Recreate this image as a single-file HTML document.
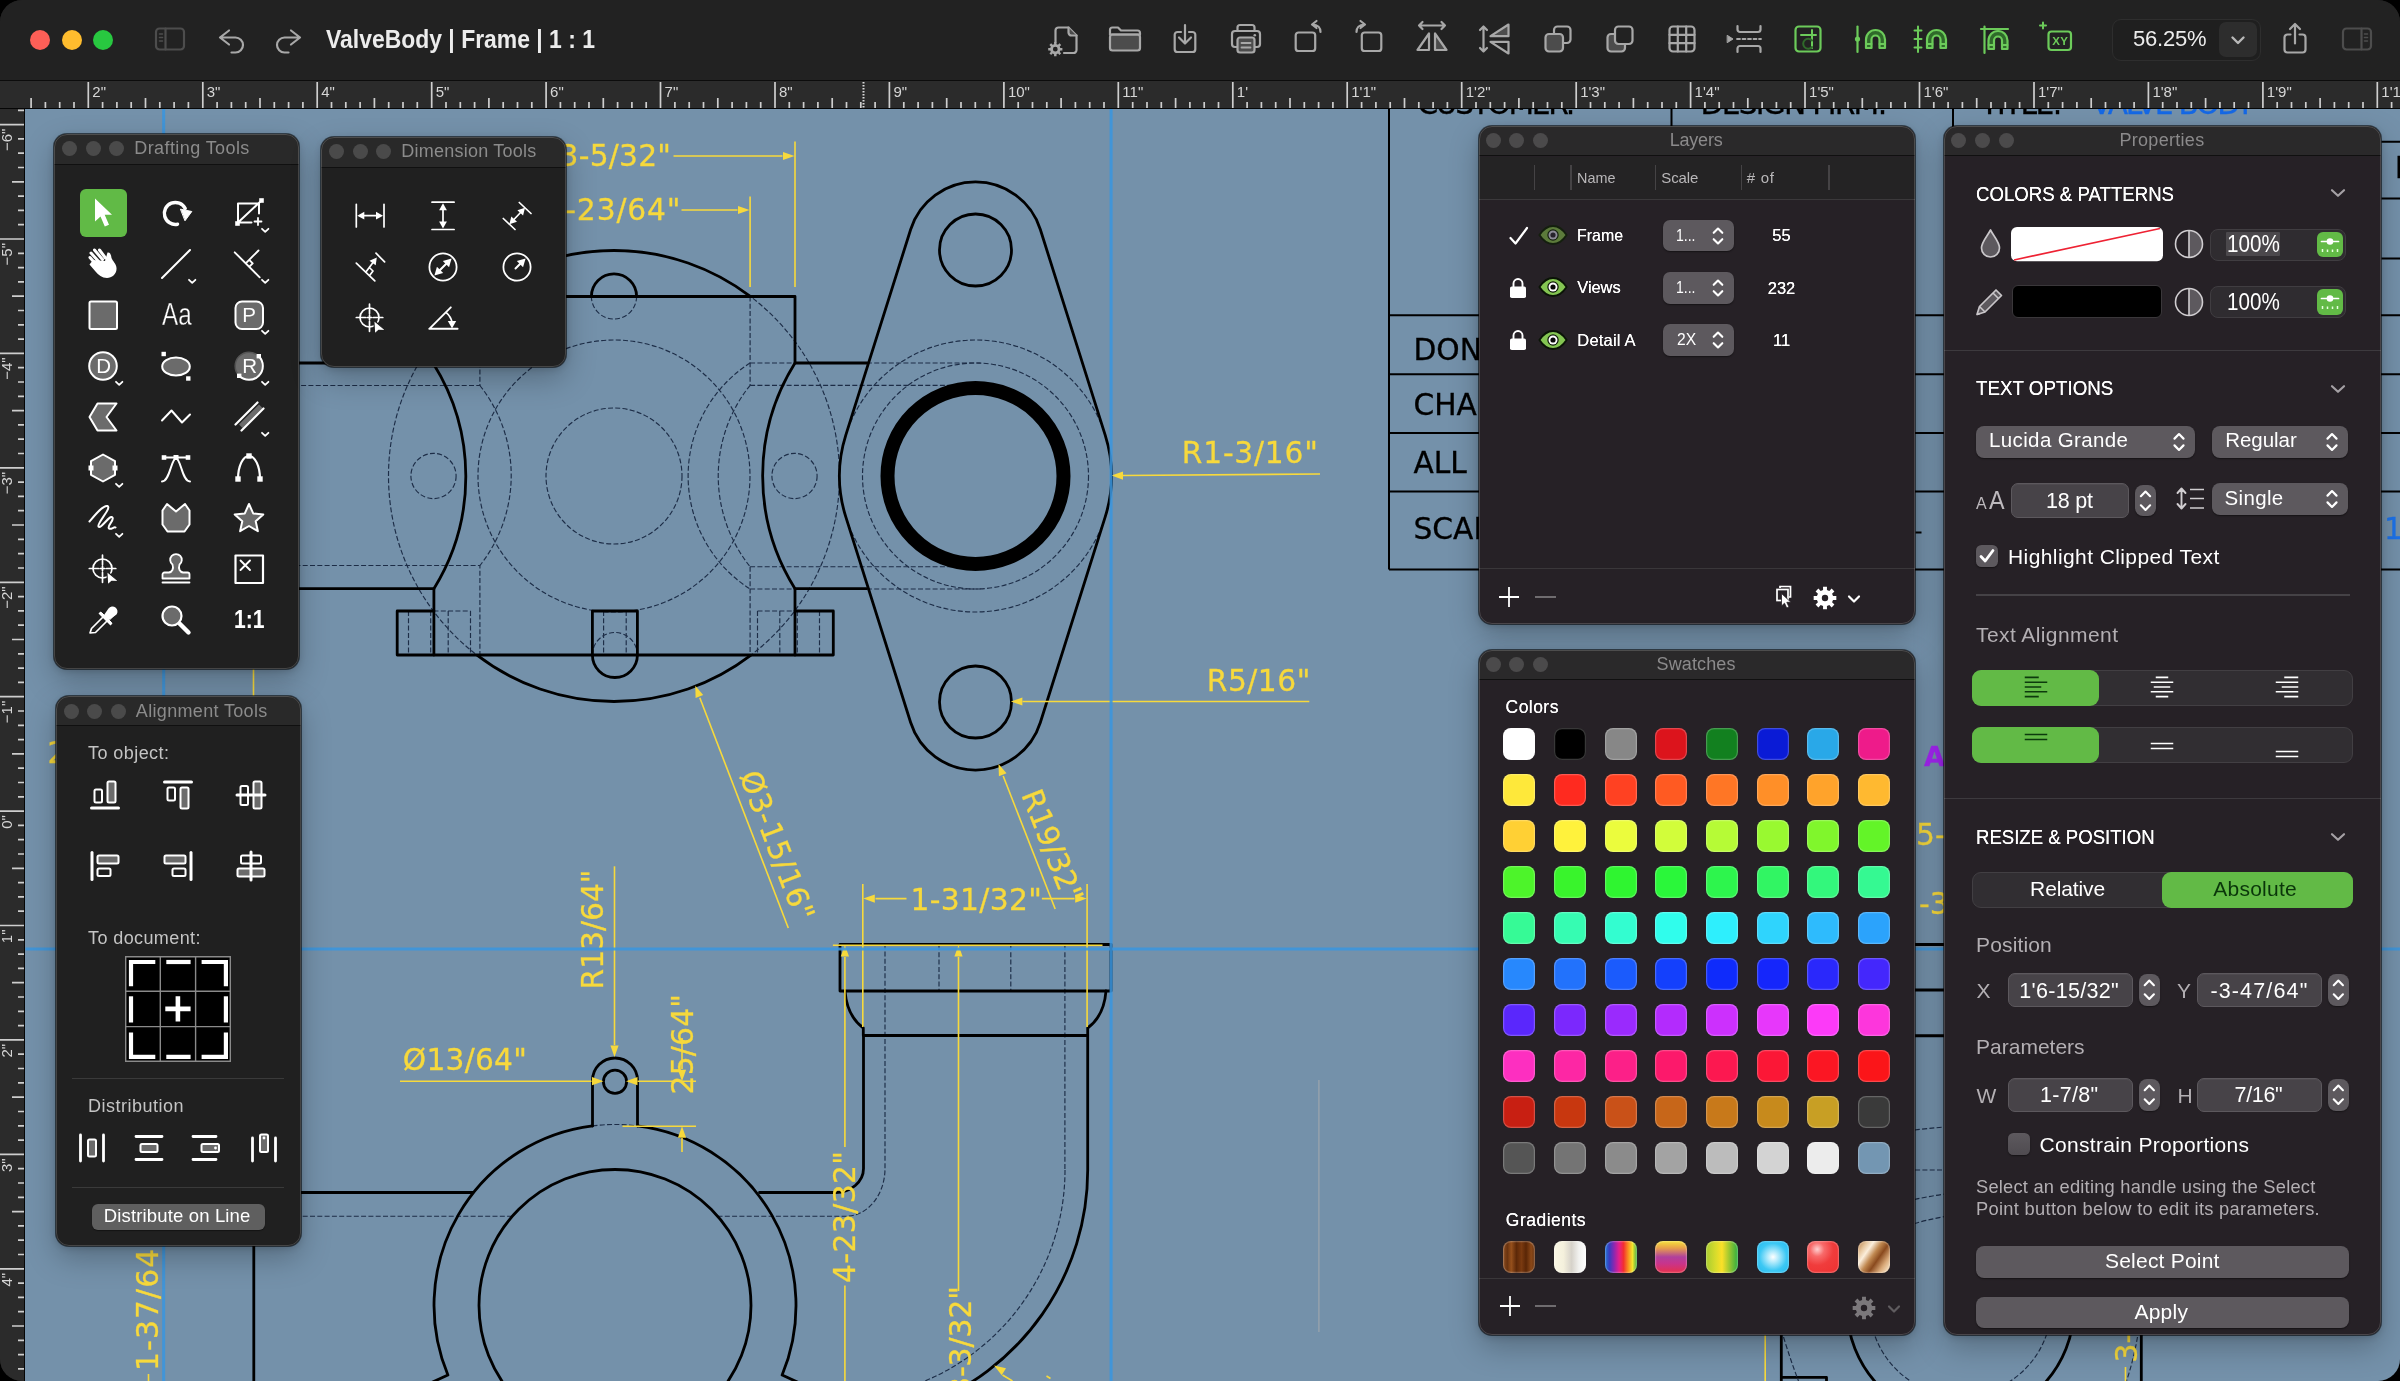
<!DOCTYPE html>
<html lang="en"><head><meta charset="utf-8"><title>ValveBody | Frame | 1 : 1</title>
<style>
*{box-sizing:border-box;margin:0;padding:0}
html,body{width:2400px;height:1381px;overflow:hidden;background:#000}
body{font-family:"Liberation Sans",sans-serif;-webkit-font-smoothing:antialiased}
#win{will-change:transform;position:absolute;left:0;top:0;width:2400px;height:1381px;border-radius:22px;overflow:hidden;background:#222}
.t{position:absolute;white-space:pre;display:block}
.ic{position:absolute;overflow:visible}
#titlebar{position:absolute;left:0;top:0;width:2400px;height:81px;background:#222222;border-bottom:1.5px solid #0c0c0c}
.tl{position:absolute;width:20px;height:20px;border-radius:50%}
#zoomf{position:absolute;left:2111.5px;top:18.5px;width:149px;height:42px;border-radius:9px;background:#1f1f1f;border:1.5px solid #2e2e2e}
#zoomb{position:absolute;left:2219px;top:22px;width:38px;height:35px;border-radius:7px;background:#2d2d2d}
#hruler{position:absolute;left:0;top:81px;width:2400px;height:28px;background:#2b2b2b;border-bottom:1.500px solid #060606;overflow:hidden}
#vruler{position:absolute;left:0;top:109px;width:24.500px;height:1272px;background:#2b2b2b;border-right:1.500px solid #060606;overflow:hidden}
#canvas{position:absolute;left:24.5px;top:109px;width:2375.5px;height:1272px;background:#7491aa;overflow:hidden}
.panel{position:absolute;border-radius:13px;box-shadow:0 0 0 1px rgba(0,0,0,.55),0 12px 30px rgba(0,0,0,.25),0 2px 7px rgba(0,0,0,.16);overflow:hidden}
.panel .ph{position:absolute;left:0;top:0;width:100%;height:30.500px;border-bottom:1.5px solid #101010}
.panel .rim{position:absolute;left:0;top:0;right:0;bottom:0;border-radius:13px;border:1.5px solid rgba(255,255,255,.17);pointer-events:none}
.dot{position:absolute;width:15px;height:15px;border-radius:50%;background:#4a4a4a}
.sw{position:absolute;display:block;width:32px;height:32px;border-radius:8px;box-shadow:inset 0 0 0 1.200px rgba(255,255,255,.22)}

</style></head>
<body>
<div id="win">
<div id="canvas">
<svg id="dwg" width="2375.500" height="1272" viewBox="24.500 109 2375.500 1272" style="position:absolute;left:0;top:0" font-family='"DejaVu Sans", sans-serif' fill="none">
<g stroke="#000" stroke-width="2"><path d="M1388.500 109V569.500M1671 109V135M1952.500 109V135"/><path d="M1388.500 315.300H2400M1388.500 374.300H2400M1388.500 433H2400M1388.500 491.500H2400M1388.500 569.500H2400M2381 141.700H2400M2381 198.500H2400M2381 258.500H2400"/></g>
<text x="1413.00" y="359.70" font-size="29.7" fill="#000" stroke="#000" stroke-width="0.3">DONE BY:</text>
<text x="1413.00" y="414.70" font-size="29.7" fill="#000" stroke="#000" stroke-width="0.3">CHANGES:</text>
<text x="1413.00" y="472.50" font-size="29.7" fill="#000" stroke="#000" stroke-width="0.3">ALL DIMENSIONS</text>
<text x="1413.00" y="538.80" font-size="29.7" fill="#000" stroke="#000" stroke-width="0.3">SCALE:</text>
<text x="1417.00" y="113.70" font-size="29.7" fill="#000" textLength="158.00" lengthAdjust="spacing" stroke="#000" stroke-width="0.3">CUSTOMER:</text>
<text x="1700.00" y="113.70" font-size="29.7" fill="#000" textLength="187.00" lengthAdjust="spacing" stroke="#000" stroke-width="0.3">DESIGN FIRM:</text>
<text x="1980.00" y="113.70" font-size="29.7" fill="#000" textLength="82.00" lengthAdjust="spacing" stroke="#000" stroke-width="0.3">TITLE:</text>
<text x="2091.00" y="113.70" font-size="29.7" fill="#1568e6" textLength="163.00" lengthAdjust="spacing" stroke="#1568e6" stroke-width="0.3">VALVE BODY</text>
<text x="2394.50" y="178.30" font-size="29.7" fill="#000" font-weight="700" stroke="#000" stroke-width="0.3">DWG</text>
<text x="2383.50" y="539.30" font-size="29.7" fill="#1c72ea" stroke="#1c72ea" stroke-width="0.3">1:1</text>
<text x="1923.50" y="765.50" font-size="27" fill="#a326f2" font-weight="700" stroke="#a326f2" stroke-width="0.3">AI</text>
<path d="M1915 532.500H1921" stroke="#000" stroke-width="2"/>
<path d="M1318.400 1080V1332" stroke="#9aa4ad" stroke-width="1.300"/>
<g stroke="#1d2d47" stroke-width="1.150" stroke-dasharray="5 2.300"><circle cx="613.5" cy="476" r="225.5"/><circle cx="613.5" cy="476" r="136"/><circle cx="613.5" cy="476" r="68"/><circle cx="433" cy="476" r="22.6"/><circle cx="794" cy="476" r="22.6"/><path d="M636.10 296.50A22.6 22.6 0 0 1 590.90 296.50"/><circle cx="975" cy="476" r="136"/><circle cx="975" cy="476" r="113"/><path d="M749.600 363A134 134 0 0 0 749.600 589M749.600 385.300A145 145 0 0 0 749.600 566.700"/><path d="M479.400 385.500A145 145 0 0 1 479.400 565.500"/><path d="M749.600 296.500V385.300M749.600 363H980M749.600 385.300H980M749.600 566.700V655M749.600 566.700H980M749.600 589H980"/><path d="M479.400 296.500V385.500H200M200 565.500H479.400V655"/><path d="M408 611V655M430.200 611V655M447.700 611V655M470 611V655M433 611H470"/><path d="M819 611V655M796.800 611V655M779.300 611V655M757 611V655M757 611H794"/><path d="M603.100 611V655M625.700 611V655"/><path d="M591.90 655.00A22.5 22.5 0 0 1 636.90 655.00"/></g>
<g stroke="#000" stroke-width="2.800" stroke-linejoin="round" stroke-linecap="round"><path d="M476.85 296.62A225.5 225.5 0 0 1 750.15 296.62"/><path d="M750.15 655.38A225.5 225.5 0 0 1 476.85 655.38"/><path d="M200 363H432.500V296.500H794.500V363H866.500"/><path d="M200 588.700H433.400V655M866 588.700H794.500V655"/><path d="M794.500 363A213 213 0 0 0 794.500 588.700M432.500 363A213 213 0 0 1 433.400 588.700"/><path d="M396.700 611H433.400M396.700 611V655H832.800V611H794.500"/><path d="M590.90 296.50A22.6 22.6 0 0 1 636.10 296.50"/><path d="M591.900 611H636.900M591.900 611V655A22.500 22.500 0 0 0 636.900 655V611"/><path d="M910.150 229.500A68 68 0 0 1 1039.850 229.500L1104.700 435.100A136 136 0 0 1 1104.700 516.900L1039.850 722.500A68 68 0 0 1 910.150 722.500L845.300 516.900A136 136 0 0 1 845.300 435.100Z"/><circle cx="975" cy="250" r="36"/><circle cx="975" cy="702" r="36"/></g><circle cx="975" cy="476" r="88" stroke="#000" stroke-width="14"/>
<g stroke="#1d2d47" stroke-width="1.150" stroke-dasharray="5 2.300"><path d="M200 1216.200H512M717 1216.200H845.800A38.700 47.700 0 0 0 884.500 1168.500V945"/><path d="M938.500 945V991M1010.300 945V991M1064.400 945V1170"/><path d="M1064.50 1170.00A229 229 0 0 1 894.77 1391.20"/><path d="M592.00 1125.90A181 181 0 0 1 637.00 1125.90"/></g>
<g stroke="#000" stroke-width="2.800" stroke-linejoin="round" stroke-linecap="round"><circle cx="614.5" cy="1305.5" r="136"/><path d="M637.00 1125.90A181 181 0 0 1 781.63 1375.00L799 1383"/><path d="M430 1383L447.400 1375A181 181 0 0 1 592.00 1125.90"/><path d="M253.300 1192.500V1381"/><path d="M592 1126V1080.500A22.500 22.500 0 0 1 637 1080.500V1126"/><circle cx="614.5" cy="1081.7" r="11.6"/><path d="M200 1192.500H472M759 1192.500H835A28 24 0 0 0 863 1168.500V1035.500"/><path d="M839.500 944.500H1110.500V991H839.500Z"/><path d="M844.500 991Q846.500 1016 862.800 1028V1035.500H1087.200V1028Q1103.500 1016 1105.500 991"/><path d="M1087.200 1035.500V1170A251.7 251.7 0 0 1 921.59 1406.52"/><path d="M1780.800 1330V1381M1780.800 1377.400H1826V1381M2140.800 1330V1381"/><path d="M2073.50 1307.00A113.5 113.5 0 0 1 1846.50 1307.00"/><path d="M1900 944.500H1960M1900 990H1960M1900 1035.700H1960" stroke-width="3"/></g>
<g stroke="#1d2d47" stroke-width="1.150" stroke-dasharray="5 2.300"><path d="M2051.00 1305.00A91 91 0 0 1 1869.00 1305.00"/><path d="M1783 1337Q1790 1360 1798 1381M2137 1337Q2133 1360 2126 1381"/><path d="M1900 1170H1960M1900 1203Q1925 1196 1960 1192M1900 1228Q1925 1219 1960 1214M1900 1132Q1925 1128 1960 1126"/></g>
<g stroke="#f7d93c" stroke-width="1.600"><path d="M673 156H782M794.500 141.500V287M681 210H737M749.600 196.500V287"/><path d="M1319.500 474L1122 475.500"/><path d="M1308.800 701.500H1022"/><path d="M1002.700 776L1054.700 909"/><path d="M699.300 697.700L787.800 928"/><path d="M862.300 884V1027M1086.600 884V1027M875 898.600H906M1041.400 898.600H1074"/><path d="M614 866.300V1045"/><path d="M399.500 1081.200H591M637 1081.200H695.500M622 1126.300H695.500M681.500 1038V1069M681.500 1138V1152"/><path d="M844.400 957V1147M844.400 1285.500V1381M958 957V1291M832.400 945.300H1102"/><path d="M253 660V700M148 1374V1381M1764.700 1330V1381M2125 1367V1381"/><path d="M1002 1375L1012 1381M1046 1376L1050 1378.500"/></g>
<path d="M794.0 156.0L782.5 160.1L782.5 151.9Z" fill="#f7d93c" stroke="none"/>
<path d="M749.0 210.0L737.5 214.1L737.5 205.9Z" fill="#f7d93c" stroke="none"/>
<path d="M1111.0 475.6L1122.5 471.5L1122.5 479.7Z" fill="#f7d93c" stroke="none"/>
<path d="M1010.4 701.5L1021.9 697.4L1021.9 705.6Z" fill="#f7d93c" stroke="none"/>
<path d="M998.0 764.0L1006.0 773.2L998.4 776.2Z" fill="#f7d93c" stroke="none"/>
<path d="M694.8 685.8L702.7 695.1L695.1 698.0Z" fill="#f7d93c" stroke="none"/>
<path d="M862.8 898.6L874.3 894.5L874.3 902.7Z" fill="#f7d93c" stroke="none"/>
<path d="M1086.2 898.6L1074.7 902.7L1074.7 894.5Z" fill="#f7d93c" stroke="none"/>
<path d="M614.0 1057.0L609.9 1045.5L618.1 1045.5Z" fill="#f7d93c" stroke="none"/>
<path d="M603.0 1081.2L591.5 1085.3L591.5 1077.1Z" fill="#f7d93c" stroke="none"/>
<path d="M625.5 1081.2L637.0 1077.1L637.0 1085.3Z" fill="#f7d93c" stroke="none"/>
<path d="M681.5 1081.2L677.4 1069.7L685.6 1069.7Z" fill="#f7d93c" stroke="none"/>
<path d="M681.5 1126.3L685.6 1137.8L677.4 1137.8Z" fill="#f7d93c" stroke="none"/>
<path d="M844.4 945.0L848.5 956.5L840.3 956.5Z" fill="#f7d93c" stroke="none"/>
<path d="M958.0 945.0L962.1 956.5L953.9 956.5Z" fill="#f7d93c" stroke="none"/>
<path d="M993.6 1365.6L1005.5 1368.2L1001.2 1375.2Z" fill="#f7d93c" stroke="none"/>
<text x="559.00" y="166.30" font-size="29.7" fill="#f7d93c" textLength="111.50" lengthAdjust="spacing" stroke="#f7d93c" stroke-width="0.3">3-5/32&quot;</text>
<text x="545.00" y="220.30" font-size="29.7" fill="#f7d93c" textLength="135.00" lengthAdjust="spacing" stroke="#f7d93c" stroke-width="0.3">2-23/64&quot;</text>
<text x="1181.30" y="463.00" font-size="29.7" fill="#f7d93c" textLength="136.00" lengthAdjust="spacing" stroke="#f7d93c" stroke-width="0.3">R1-3/16&quot;</text>
<text x="1206.30" y="690.50" font-size="29.7" fill="#f7d93c" textLength="103.50" lengthAdjust="spacing" stroke="#f7d93c" stroke-width="0.3">R5/16&quot;</text>
<text x="910.00" y="909.60" font-size="29.7" fill="#f7d93c" textLength="131.40" lengthAdjust="spacing" stroke="#f7d93c" stroke-width="0.3">1-31/32&quot;</text>
<text x="402.30" y="1070.20" font-size="29.7" fill="#f7d93c" textLength="124.00" lengthAdjust="spacing" stroke="#f7d93c" stroke-width="0.3">Ø13/64&quot;</text>
<text x="0.00" y="0.00" font-size="29.7" fill="#f7d93c" textLength="119.00" lengthAdjust="spacing" transform="translate(1020.500,794.500) rotate(68.600)" stroke="#f7d93c" stroke-width="0.3">R19/32&quot;</text>
<text x="0.00" y="0.00" font-size="29.7" fill="#f7d93c" textLength="158.00" lengthAdjust="spacing" transform="translate(738.700,775.400) rotate(69)" stroke="#f7d93c" stroke-width="0.3">Ø3-15/16&quot;</text>
<text x="0.00" y="0.00" font-size="29.7" fill="#f7d93c" textLength="120.00" lengthAdjust="spacing" transform="translate(602.300,989.500) rotate(-90)" stroke="#f7d93c" stroke-width="0.3">R13/64&quot;</text>
<text x="0.00" y="0.00" font-size="29.7" fill="#f7d93c" textLength="100.50" lengthAdjust="spacing" transform="translate(692,1094.500) rotate(-90)" stroke="#f7d93c" stroke-width="0.3">25/64&quot;</text>
<text x="0.00" y="0.00" font-size="29.7" fill="#f7d93c" textLength="132.00" lengthAdjust="spacing" transform="translate(854.800,1283) rotate(-90)" stroke="#f7d93c" stroke-width="0.3">4-23/32&quot;</text>
<text x="0.00" y="0.00" font-size="29.7" fill="#f7d93c" textLength="110.00" lengthAdjust="spacing" transform="translate(970,1396) rotate(-90)" stroke="#f7d93c" stroke-width="0.3">3-3/32&quot;</text>
<text x="0.00" y="0.00" font-size="29.7" fill="#f7d93c" textLength="137.00" lengthAdjust="spacing" transform="translate(157.500,1371) rotate(-90)" stroke="#f7d93c" stroke-width="0.3">1-37/64&quot;</text>
<text x="0.00" y="0.00" font-size="29.7" fill="#f7d93c" transform="translate(2136,1362.500) rotate(-90)" stroke="#f7d93c" stroke-width="0.3">3-1/2&quot;</text>
<text x="47.00" y="762.50" font-size="29.7" fill="#f7d93c" stroke="#f7d93c" stroke-width="0.3">2&quot;</text>
<text x="1915.50" y="845.00" font-size="29.7" fill="#f7d93c" stroke="#f7d93c" stroke-width="0.3">5-1/8&quot;</text>
<text x="1918.50" y="913.70" font-size="29.7" fill="#f7d93c" stroke="#f7d93c" stroke-width="0.3">-3/4&quot;</text>
<path d="M25 948.900H2400M1110.600 109V1381M163.200 109V1381" stroke="#3a95de" stroke-width="3" opacity=".88"/>
</svg>
</div>
<div id="hruler">
<svg width="2400" height="28" style="position:absolute;left:0;top:0" stroke="#cecece" stroke-width="1.700"><path d="M31.1 17V27 M45.4 21V27 M59.7 21V27 M74.0 21V27 M88.3 1V27 M102.6 21V27 M116.9 21V27 M131.2 21V27 M145.5 17V27 M159.8 21V27 M174.1 21V27 M188.4 21V27 M202.8 1V27 M217.1 21V27 M231.4 21V27 M245.7 21V27 M260.0 17V27 M274.3 21V27 M288.6 21V27 M302.9 21V27 M317.2 1V27 M331.5 21V27 M345.8 21V27 M360.1 21V27 M374.4 17V27 M388.7 21V27 M403.0 21V27 M417.3 21V27 M431.7 1V27 M446.0 21V27 M460.3 21V27 M474.6 21V27 M488.9 17V27 M503.2 21V27 M517.5 21V27 M531.8 21V27 M546.1 1V27 M560.4 21V27 M574.7 21V27 M589.0 21V27 M603.3 17V27 M617.6 21V27 M631.9 21V27 M646.2 21V27 M660.5 1V27 M674.9 21V27 M689.2 21V27 M703.5 21V27 M717.8 17V27 M732.1 21V27 M746.4 21V27 M760.7 21V27 M775.0 1V27 M789.3 21V27 M803.6 21V27 M817.9 21V27 M832.2 17V27 M846.5 21V27 M860.8 21V27 M875.1 21V27 M889.4 1V27 M903.8 21V27 M918.1 21V27 M932.4 21V27 M946.7 17V27 M961.0 21V27 M975.3 21V27 M989.6 21V27 M1003.9 1V27 M1018.2 21V27 M1032.5 21V27 M1046.8 21V27 M1061.1 17V27 M1075.4 21V27 M1089.7 21V27 M1104.0 21V27 M1118.3 1V27 M1132.7 21V27 M1147.0 21V27 M1161.3 21V27 M1175.6 17V27 M1189.9 21V27 M1204.2 21V27 M1218.5 21V27 M1232.8 1V27 M1247.1 21V27 M1261.4 21V27 M1275.7 21V27 M1290.0 17V27 M1304.3 21V27 M1318.6 21V27 M1332.9 21V27 M1347.2 1V27 M1361.6 21V27 M1375.9 21V27 M1390.2 21V27 M1404.5 17V27 M1418.8 21V27 M1433.1 21V27 M1447.4 21V27 M1461.7 1V27 M1476.0 21V27 M1490.3 21V27 M1504.6 21V27 M1518.9 17V27 M1533.2 21V27 M1547.5 21V27 M1561.8 21V27 M1576.2 1V27 M1590.5 21V27 M1604.8 21V27 M1619.1 21V27 M1633.4 17V27 M1647.7 21V27 M1662.0 21V27 M1676.3 21V27 M1690.6 1V27 M1704.9 21V27 M1719.2 21V27 M1733.5 21V27 M1747.8 17V27 M1762.1 21V27 M1776.4 21V27 M1790.7 21V27 M1805.0 1V27 M1819.4 21V27 M1833.7 21V27 M1848.0 21V27 M1862.3 17V27 M1876.6 21V27 M1890.9 21V27 M1905.2 21V27 M1919.5 1V27 M1933.8 21V27 M1948.1 21V27 M1962.4 21V27 M1976.7 17V27 M1991.0 21V27 M2005.3 21V27 M2019.6 21V27 M2034.0 1V27 M2048.3 21V27 M2062.6 21V27 M2076.9 21V27 M2091.2 17V27 M2105.5 21V27 M2119.8 21V27 M2134.1 21V27 M2148.4 1V27 M2162.7 21V27 M2177.0 21V27 M2191.3 21V27 M2205.6 17V27 M2219.9 21V27 M2234.2 21V27 M2248.5 21V27 M2262.9 1V27 M2277.2 21V27 M2291.5 21V27 M2305.8 21V27 M2320.1 17V27 M2334.4 21V27 M2348.7 21V27 M2363.0 21V27 M2377.3 1V27 M2391.6 21V27"/><path d="M863.5 1V27" stroke-dasharray="1.5 1.5" stroke="#d8d8d8" stroke-width="2"/></svg>
<span class="t" style="left:92.30px;top:3.30px;font-size:15px;line-height:15px;color:#d6d6d6;">2&quot;</span>
<span class="t" style="left:206.75px;top:3.30px;font-size:15px;line-height:15px;color:#d6d6d6;">3&quot;</span>
<span class="t" style="left:321.20px;top:3.30px;font-size:15px;line-height:15px;color:#d6d6d6;">4&quot;</span>
<span class="t" style="left:435.65px;top:3.30px;font-size:15px;line-height:15px;color:#d6d6d6;">5&quot;</span>
<span class="t" style="left:550.10px;top:3.30px;font-size:15px;line-height:15px;color:#d6d6d6;">6&quot;</span>
<span class="t" style="left:664.55px;top:3.30px;font-size:15px;line-height:15px;color:#d6d6d6;">7&quot;</span>
<span class="t" style="left:779.00px;top:3.30px;font-size:15px;line-height:15px;color:#d6d6d6;">8&quot;</span>
<span class="t" style="left:893.45px;top:3.30px;font-size:15px;line-height:15px;color:#d6d6d6;">9&quot;</span>
<span class="t" style="left:1007.90px;top:3.30px;font-size:15px;line-height:15px;color:#d6d6d6;">10&quot;</span>
<span class="t" style="left:1122.35px;top:3.30px;font-size:15px;line-height:15px;color:#d6d6d6;">11&quot;</span>
<span class="t" style="left:1236.80px;top:3.30px;font-size:15px;line-height:15px;color:#d6d6d6;">1'</span>
<span class="t" style="left:1351.25px;top:3.30px;font-size:15px;line-height:15px;color:#d6d6d6;">1'1&quot;</span>
<span class="t" style="left:1465.70px;top:3.30px;font-size:15px;line-height:15px;color:#d6d6d6;">1'2&quot;</span>
<span class="t" style="left:1580.15px;top:3.30px;font-size:15px;line-height:15px;color:#d6d6d6;">1'3&quot;</span>
<span class="t" style="left:1694.60px;top:3.30px;font-size:15px;line-height:15px;color:#d6d6d6;">1'4&quot;</span>
<span class="t" style="left:1809.05px;top:3.30px;font-size:15px;line-height:15px;color:#d6d6d6;">1'5&quot;</span>
<span class="t" style="left:1923.50px;top:3.30px;font-size:15px;line-height:15px;color:#d6d6d6;">1'6&quot;</span>
<span class="t" style="left:2037.95px;top:3.30px;font-size:15px;line-height:15px;color:#d6d6d6;">1'7&quot;</span>
<span class="t" style="left:2152.40px;top:3.30px;font-size:15px;line-height:15px;color:#d6d6d6;">1'8&quot;</span>
<span class="t" style="left:2266.85px;top:3.30px;font-size:15px;line-height:15px;color:#d6d6d6;">1'9&quot;</span>
<span class="t" style="left:2381.30px;top:3.30px;font-size:15px;line-height:15px;color:#d6d6d6;">1'10&quot;</span>
</div>
<div id="vruler">
<svg width="24" height="1300" style="position:absolute;left:0;top:0" stroke="#cecece" stroke-width="1.700"><path d="M18 1.3H24 M0 15.6H24 M18 29.9H24 M18 44.2H24 M18 58.5H24 M12 72.8H24 M18 87.1H24 M18 101.4H24 M18 115.7H24 M0 130.0H24 M18 144.3H24 M18 158.6H24 M18 172.9H24 M12 187.2H24 M18 201.5H24 M18 215.8H24 M18 230.1H24 M0 244.4H24 M18 258.7H24 M18 273.0H24 M18 287.3H24 M12 301.6H24 M18 315.9H24 M18 330.2H24 M18 344.5H24 M0 358.8H24 M18 373.1H24 M18 387.4H24 M18 401.7H24 M12 416.0H24 M18 430.4H24 M18 444.7H24 M18 459.0H24 M0 473.3H24 M18 487.6H24 M18 501.9H24 M18 516.2H24 M12 530.5H24 M18 544.8H24 M18 559.1H24 M18 573.4H24 M0 587.7H24 M18 602.0H24 M18 616.3H24 M18 630.6H24 M12 644.9H24 M18 659.2H24 M18 673.5H24 M18 687.8H24 M0 702.1H24 M18 716.4H24 M18 730.7H24 M18 745.0H24 M12 759.3H24 M18 773.6H24 M18 787.9H24 M18 802.2H24 M0 816.5H24 M18 830.8H24 M18 845.1H24 M18 859.4H24 M12 873.7H24 M18 888.0H24 M18 902.3H24 M18 916.6H24 M0 930.9H24 M18 945.2H24 M18 959.5H24 M18 973.8H24 M12 988.2H24 M18 1002.5H24 M18 1016.8H24 M18 1031.1H24 M0 1045.4H24 M18 1059.7H24 M18 1074.0H24 M18 1088.3H24 M12 1102.6H24 M18 1116.9H24 M18 1131.2H24 M18 1145.5H24 M0 1159.8H24 M18 1174.1H24 M18 1188.4H24 M18 1202.7H24 M12 1217.0H24 M18 1231.3H24 M18 1245.6H24 M18 1259.9H24 M0 1274.2H24 M18 1288.5H24"/><text transform="translate(12.2,19.6) rotate(-90)" text-anchor="end" font-size="15" fill="#d6d6d6" stroke="none" font-family='"Liberation Sans", sans-serif'>−6&quot;</text><text transform="translate(12.2,134.0) rotate(-90)" text-anchor="end" font-size="15" fill="#d6d6d6" stroke="none" font-family='"Liberation Sans", sans-serif'>−5&quot;</text><text transform="translate(12.2,248.4) rotate(-90)" text-anchor="end" font-size="15" fill="#d6d6d6" stroke="none" font-family='"Liberation Sans", sans-serif'>−4&quot;</text><text transform="translate(12.2,362.8) rotate(-90)" text-anchor="end" font-size="15" fill="#d6d6d6" stroke="none" font-family='"Liberation Sans", sans-serif'>−3&quot;</text><text transform="translate(12.2,477.3) rotate(-90)" text-anchor="end" font-size="15" fill="#d6d6d6" stroke="none" font-family='"Liberation Sans", sans-serif'>−2&quot;</text><text transform="translate(12.2,591.7) rotate(-90)" text-anchor="end" font-size="15" fill="#d6d6d6" stroke="none" font-family='"Liberation Sans", sans-serif'>−1&quot;</text><text transform="translate(12.2,706.1) rotate(-90)" text-anchor="end" font-size="15" fill="#d6d6d6" stroke="none" font-family='"Liberation Sans", sans-serif'>0&quot;</text><text transform="translate(12.2,820.5) rotate(-90)" text-anchor="end" font-size="15" fill="#d6d6d6" stroke="none" font-family='"Liberation Sans", sans-serif'>1&quot;</text><text transform="translate(12.2,934.9) rotate(-90)" text-anchor="end" font-size="15" fill="#d6d6d6" stroke="none" font-family='"Liberation Sans", sans-serif'>2&quot;</text><text transform="translate(12.2,1049.4) rotate(-90)" text-anchor="end" font-size="15" fill="#d6d6d6" stroke="none" font-family='"Liberation Sans", sans-serif'>3&quot;</text><text transform="translate(12.2,1163.8) rotate(-90)" text-anchor="end" font-size="15" fill="#d6d6d6" stroke="none" font-family='"Liberation Sans", sans-serif'>4&quot;</text><text transform="translate(12.2,1278.2) rotate(-90)" text-anchor="end" font-size="15" fill="#d6d6d6" stroke="none" font-family='"Liberation Sans", sans-serif'>5&quot;</text></svg>
</div>
<div id="titlebar">
<div class="tl" style="left:30px;top:29.5px;background:#fe5f57"></div>
<div class="tl" style="left:61.5px;top:29.5px;background:#febc2e"></div>
<div class="tl" style="left:93px;top:29.5px;background:#28c840"></div>
<svg class="ic" style="left:149.5px;top:19.0px" width="40" height="40" viewBox="-20.0 -20.0 40 40" fill="none" stroke="#4d4d4d" stroke-width="2.2" stroke-linecap="round" stroke-linejoin="round" ><rect x="-14" y="-10.5" width="28" height="21" rx="3.5"/><path d="M-4.5 -10.5V10.5"/><path d="M-10.5 -5h3M-10.5 -1.5h3M-10.5 2h3" stroke-width="1.6"/></svg>
<svg class="ic" style="left:211.0px;top:19.5px" width="40" height="40" viewBox="-20.0 -20.0 40 40" fill="none" stroke="#a8a8a8" stroke-width="2.2" stroke-linecap="round" stroke-linejoin="round" ><path d="M-2 -9.5L-11 -2.5L-2 4.5M-11 -2.5H4.5A7.5 7.5 0 0 1 4.5 12.5H0.5"/></svg>
<svg class="ic" style="left:269.0px;top:19.5px" width="40" height="40" viewBox="-20.0 -20.0 40 40" fill="none" stroke="#a8a8a8" stroke-width="2.2" stroke-linecap="round" stroke-linejoin="round" ><path d="M2 -9.5L11 -2.5L2 4.5M11 -2.5H-4.5A7.5 7.5 0 0 0 -4.5 12.5H-0.5"/></svg>
<span class="t" style="left:326.00px;top:26.49px;font-size:26px;line-height:26px;color:#ececec;font-weight:700;transform:scaleX(0.8819);transform-origin:0 0;">ValveBody | Frame | 1 : 1</span>
<svg class="ic" style="left:1042.0px;top:17.5px" width="44" height="44" viewBox="-22.0 -22.0 44 44" fill="none" stroke="#a8a8a8" stroke-width="2.2" stroke-linecap="round" stroke-linejoin="round" ><path d="M-8.5 2V-9.5a3 3 0 0 1 3 -3H4.5L12.5 -4.5V10a3 3 0 0 1 -3 3H0"/><path d="M4.5 -12.5V-7.5a3 3 0 0 0 3 3H12.5" fill="#4c4c4c"/><path d="M-1.61 7.96 L-1.61 10.44 L-3.66 10.41 L-4.28 11.91 L-2.81 13.34 L-4.56 15.09 L-5.99 13.62 L-7.49 14.24 L-7.46 16.29 L-9.94 16.29 L-9.91 14.24 L-11.41 13.62 L-12.84 15.09 L-14.59 13.34 L-13.12 11.91 L-13.74 10.41 L-15.79 10.44 L-15.79 7.96 L-13.74 7.99 L-13.12 6.49 L-14.59 5.06 L-12.84 3.31 L-11.41 4.78 L-9.91 4.16 L-9.94 2.11 L-7.46 2.11 L-7.49 4.16 L-5.99 4.78 L-4.56 3.31 L-2.81 5.06 L-4.28 6.49 L-3.66 7.99Z M-6.32 9.20 A2.38 2.38 0 1 0 -11.08 9.20 A2.38 2.38 0 1 0 -6.32 9.20Z" fill="#a8a8a8" fill-rule="evenodd" stroke="none"/></svg>
<svg class="ic" style="left:1103.0px;top:19.0px" width="44" height="40" viewBox="-22.0 -20.0 44 40" fill="none" stroke="#a8a8a8" stroke-width="2.2" stroke-linecap="round" stroke-linejoin="round" ><path d="M-15 -4.5V-9a2.5 2.5 0 0 1 2.5 -2.5H-7l3 3H12.5A2.5 2.5 0 0 1 15 -6v1.5"/><rect x="-15" y="-4.5" width="30" height="16" rx="2.5" fill="#4c4c4c"/><path d="M-15 -4.5H15"/></svg>
<svg class="ic" style="left:1165.3px;top:20.0px" width="40" height="40" viewBox="-20.0 -20.0 40 40" fill="none" stroke="#a8a8a8" stroke-width="2.2" stroke-linecap="round" stroke-linejoin="round" ><path d="M-4 -8H-7.500a2.800 2.800 0 0 0 -2.800 2.800V9.200a2.800 2.800 0 0 0 2.800 2.800H7.500a2.800 2.800 0 0 0 2.800 -2.800V-5.200A2.800 2.800 0 0 0 7.500 -8H4"/><path d="M0 -15V3M-6 -2.5L0 3.5L6 -2.5"/></svg>
<svg class="ic" style="left:1224.3px;top:17.3px" width="44" height="44" viewBox="-22.0 -22.0 44 44" fill="none" stroke="#a8a8a8" stroke-width="2.2" stroke-linecap="round" stroke-linejoin="round" ><path d="M-8.500 -8V-11.5a2.500 2.500 0 0 1 2.500 -2.500H6a2.500 2.500 0 0 1 2.500 2.500V-8"/><path d="M-9 8H-11a3 3 0 0 1 -3 -3V-5a3 3 0 0 1 3 -3H11a3 3 0 0 1 3 3V5a3 3 0 0 1 -3 3H9"/><rect x="-8.5" y="-1.500" width="17" height="15" rx="2.500" fill="#4c4c4c"/><path d="M-4.500 4h9M-4.500 8.500h9" stroke-width="1.8"/><circle cx="8.800" cy="-3.800" r="1.300" fill="#a8a8a8" stroke="none"/></svg>
<svg class="ic" style="left:1285.5px;top:16.7px" width="44" height="44" viewBox="-22.0 -22.0 44 44" fill="none" stroke="#a8a8a8" stroke-width="2.2" stroke-linecap="round" stroke-linejoin="round" ><rect x="-12.300" y="-6.500" width="19.500" height="18.500" rx="2.800"/><path d="M12.500 -7C12.500 -11 10 -14.500 4.500 -14.500M8.500 -18L4 -14.500L8.500 -11"/></svg>
<svg class="ic" style="left:1346.7px;top:16.7px" width="44" height="44" viewBox="-22.0 -22.0 44 44" fill="none" stroke="#a8a8a8" stroke-width="2.2" stroke-linecap="round" stroke-linejoin="round" ><rect x="-7.200" y="-6.500" width="19.500" height="18.500" rx="2.800"/><path d="M-12.500 -7C-12.500 -11 -10 -14.500 -4.500 -14.500M-8.500 -18L-4 -14.500L-8.500 -11"/></svg>
<svg class="ic" style="left:1409.7px;top:16.5px" width="44" height="44" viewBox="-22.0 -22.0 44 44" fill="none" stroke="#a8a8a8" stroke-width="2.2" stroke-linecap="round" stroke-linejoin="round" ><path d="M-13 -13.500H13M-9.500 -17L-13 -13.500L-9.500 -10M9.500 -17L13 -13.500L9.500 -10"/><path d="M-3 -5.500V11H-14.500Z"/><path d="M3 -5.500V11H14.500Z" fill="#4c4c4c"/></svg>
<svg class="ic" style="left:1472.7px;top:16.5px" width="44" height="44" viewBox="-22.0 -22.0 44 44" fill="none" stroke="#a8a8a8" stroke-width="2.2" stroke-linecap="round" stroke-linejoin="round" ><path d="M-11.500 -12.500V12.500M-15 -9L-11.500 -12.500L-8 -9M-15 9L-11.500 12.500L-8 9"/><path d="M-4.500 -2.800H13.500V-14.500Z" fill="#4c4c4c"/><path d="M-4.500 2.800H13.500V14.500Z"/></svg>
<svg class="ic" style="left:1536.3px;top:17.0px" width="44" height="44" viewBox="-22.0 -22.0 44 44" fill="none" stroke="#a8a8a8" stroke-width="2.2" stroke-linecap="round" stroke-linejoin="round" ><rect x="-4" y="-12.500" width="16.500" height="16.500" rx="3.500"/><rect x="-12.500" y="-5" width="17.500" height="17.500" rx="3.500" fill="#4c4c4c"/></svg>
<svg class="ic" style="left:1598.0px;top:17.0px" width="44" height="44" viewBox="-22.0 -22.0 44 44" fill="none" stroke="#a8a8a8" stroke-width="2.2" stroke-linecap="round" stroke-linejoin="round" ><rect x="-12.500" y="-5" width="17.500" height="17.500" rx="3.500" fill="#4c4c4c"/><rect x="-5" y="-12.500" width="17.500" height="17.500" rx="3.500" fill="#222"/></svg>
<svg class="ic" style="left:1660.3px;top:17.0px" width="44" height="44" viewBox="-22.0 -22.0 44 44" fill="none" stroke="#a8a8a8" stroke-width="2.2" stroke-linecap="round" stroke-linejoin="round" ><rect x="-12.500" y="-12.500" width="25" height="25" rx="3.500"/><path d="M-4.200 -12.500V12.500M4.200 -12.500V12.500M-12.500 -4.200H12.500M-12.500 4.200H12.500"/></svg>
<svg class="ic" style="left:1722.0px;top:17.0px" width="48" height="44" viewBox="-24.0 -22.0 48 44" fill="none" stroke="#a8a8a8" stroke-width="2.2" stroke-linecap="round" stroke-linejoin="round" ><path d="M-8.500 -13V-9.500a2.500 2.500 0 0 0 2.500 2.500H12a2.500 2.500 0 0 0 2.500 -2.500V-13M-8.500 13V9.500a2.500 2.500 0 0 1 2.500 -2.500H12a2.500 2.500 0 0 1 2.500 2.500V13"/><path d="M-9 0H15" stroke-dasharray="3 2.500" stroke-width="1.800"/><path d="M-18.500 -3.500L-13 0L-18.500 3.500Z" fill="#a8a8a8" stroke-width="1"/></svg>
<svg class="ic" style="left:1786.0px;top:17.0px" width="44" height="44" viewBox="-22.0 -22.0 44 44" fill="none" stroke="#6ccb5a" stroke-width="2.2" stroke-linecap="round" stroke-linejoin="round" ><rect x="-12.500" y="-12.500" width="25" height="25" rx="3.500"/><path d="M-7 -4H8M4 -9V9" stroke-width="2"/><path d="M4 1.500A5 5 0 1 0 4 8" stroke="#2f6a2a" stroke-width="2"/></svg>
<svg class="ic" style="left:1846.5px;top:17.0px" width="48" height="44" viewBox="-24.0 -22.0 48 44" fill="none" stroke="#6ccb5a" stroke-width="2.2" stroke-linecap="round" stroke-linejoin="round" ><path d="M-13.500 -12.500V13"/><circle cx="-13.500" cy="0" r="2.600" fill="#6ccb5a" stroke="none"/><path d="M-5.0 9V0.500a9.500 9.500 0 0 1 19 0V9H8.5V0.500a4 4 0 0 0 -8 0V9Z" fill="#2f6a2a"/><path d="M-5.0 5H0.5M8.5 5H14.0" stroke-width="1.800"/></svg>
<svg class="ic" style="left:1907.7px;top:17.0px" width="48" height="44" viewBox="-24.0 -22.0 48 44" fill="none" stroke="#6ccb5a" stroke-width="2.2" stroke-linecap="round" stroke-linejoin="round" ><path d="M-14 -12.500V13M-17.500 -8.500H-10.500M-17.500 0H-10.500M-17.500 8.500H-10.500" stroke-width="2"/><path d="M-5.0 9V0.500a9.500 9.500 0 0 1 19 0V9H8.5V0.500a4 4 0 0 0 -8 0V9Z" fill="#2f6a2a"/><path d="M-5.0 5H0.5M8.5 5H14.0" stroke-width="1.800"/></svg>
<svg class="ic" style="left:1970.7px;top:17.5px" width="48" height="44" viewBox="-24.0 -22.0 48 44" fill="none" stroke="#6ccb5a" stroke-width="2.2" stroke-linecap="round" stroke-linejoin="round" ><path d="M-10.500 -13.500V13M-14 -11H13"/><path d="M-6.5 9V0.500a9.500 9.500 0 0 1 19 0V9H7V0.500a4 4 0 0 0 -8 0V9Z" fill="#2f6a2a"/><path d="M-6.5 5H-1M7 5H12.5" stroke-width="1.800"/></svg>
<svg class="ic" style="left:2033.0px;top:17.0px" width="48" height="44" viewBox="-24.0 -22.0 48 44" fill="none" stroke="#6ccb5a" stroke-width="2.2" stroke-linecap="round" stroke-linejoin="round" ><rect x="-8.500" y="-7.500" width="22.500" height="18.500" rx="3"/><path d="M-14 -16.500V-10.500M-17 -13.500H-11" stroke-width="2"/></svg>
<span class="t" style="left:2052.30px;top:35.57px;font-size:11.5px;line-height:11.5px;color:#6ccb5a;font-weight:700;letter-spacing:0.159px;">XY</span>
<div id="zoomf"></div><div id="zoomb"></div>
<span class="t" style="left:2133.00px;top:28.18px;font-size:22px;line-height:22px;color:#ececec;letter-spacing:-0.223px;">56.25%</span>
<svg class="ic" style="left:2226.0px;top:28.0px" width="24" height="24" viewBox="-12.0 -12.0 24 24" fill="none" stroke="#b8b8b8" stroke-width="2.4" stroke-linecap="round" stroke-linejoin="round" ><path d="M-5.500 -2.500L0 3L5.500 -2.500"/></svg>
<svg class="ic" style="left:2272.6px;top:16.5px" width="44" height="44" viewBox="-22.0 -22.0 44 44" fill="none" stroke="#a8a8a8" stroke-width="2.2" stroke-linecap="round" stroke-linejoin="round" ><path d="M-4.500 -4.500H-7.500a3 3 0 0 0 -3 3V10.500a3 3 0 0 0 3 3H7.500a3 3 0 0 0 3 -3V-1.500a3 3 0 0 0 -3 -3H4.500"/><path d="M0 4.500V-14.500M-5 -10L0 -15L5 -10"/></svg>
<svg class="ic" style="left:2336.5px;top:19.0px" width="40" height="40" viewBox="-20.0 -20.0 40 40" fill="none" stroke="#4d4d4d" stroke-width="2.2" stroke-linecap="round" stroke-linejoin="round" ><rect x="-14" y="-10.500" width="28" height="21" rx="3.500"/><path d="M4.500 -10.500V10.500"/><path d="M7.500 -5h3M7.500 -1.500h3M7.500 2h3" stroke-width="1.600"/></svg>
</div>
<div class="panel" id="drafting" style="left:54px;top:134px;width:245px;height:535px;background:#202020">
<div class="ph" style="background:#292929"></div><div class="dot" style="left:7.80px;top:6.80px"></div><div class="dot" style="left:31.50px;top:6.80px"></div><div class="dot" style="left:55.30px;top:6.80px"></div><span class="t" style="left:80.30px;top:5.26px;font-size:18px;line-height:18px;color:#8b8b8b;letter-spacing:0.406px;">Drafting Tools</span>
<div style="position:absolute;left:25.5px;top:55.30000000000001px;width:47.500px;height:47.500px;border-radius:6px;background:#61ba46"></div>
<svg class="ic" style="left:23.30px;top:53.00px" width="52" height="52" viewBox="-26.0 -26.0 52 52" fill="none" stroke="#ffffff" stroke-width="2" stroke-linecap="round" stroke-linejoin="round"><path d="M-8 -14.500V8.500L-2.500 3.500L1.800 13.500L6 11.700L1.700 1.800H9Z" fill="#fff" stroke="none"/></svg>
<svg class="ic" style="left:96.40px;top:53.00px" width="52" height="52" viewBox="-26.0 -26.0 52 52" fill="none" stroke="#ffffff" stroke-width="2" stroke-linecap="round" stroke-linejoin="round"><path d="M9.200 -4.500A11 11 0 1 0 1.500 11.200" stroke-width="3.500" stroke-linecap="round"/><path d="M4.800 -3.800L15.800 -1.500L9.200 7.500Z" fill="#fff" stroke="#fff" stroke-width="1"/></svg>
<svg class="ic" style="left:169.30px;top:53.00px" width="52" height="52" viewBox="-26.0 -26.0 52 52" fill="none" stroke="#ffffff" stroke-width="2" stroke-linecap="round" stroke-linejoin="round"><path d="M-11 -9.500H10V0.500M-11 -9.500V9.500H2.500M-11.500 10L12.500 -12.500"/><path d="M5.500 8.500H12.500M9 5V12" stroke-width="1.800"/><rect x="10.2" y="-14.8" width="4.6" height="4.6" fill="#ffffff" stroke="none"/><rect x="-13.8" y="8.2" width="4.6" height="4.6" fill="#ffffff" stroke="none"/><path d="M13 15.800L16.200 18.800L19.400 15.800" stroke-width="1.800"/></svg>
<svg class="ic" style="left:23.30px;top:104.20px" width="52" height="52" viewBox="-26.0 -26.0 52 52" fill="none" stroke="#ffffff" stroke-width="2" stroke-linecap="round" stroke-linejoin="round"><path d="M-13 -6.500L-6 1.500M-12 -11L-3 -1M-8.500 -14L-0.500 -4.500M-3.500 -14L2.500 -6" stroke-width="3"/><path d="M4.500 -11.500C7.500 -12 8 -9 8.500 -6C10 -2 13 -1 13.500 4C14 10 9 14 4 14C-1 14 -4.500 11 -7.500 7.500L-13.500 0.500L-10 -4L2 -3Z" fill="#fff" stroke="none"/></svg>
<svg class="ic" style="left:96.40px;top:104.20px" width="52" height="52" viewBox="-26.0 -26.0 52 52" fill="none" stroke="#ffffff" stroke-width="2" stroke-linecap="round" stroke-linejoin="round"><path d="M-14 14L14 -14"/><path d="M13 15.800L16.200 18.800L19.400 15.800" stroke-width="1.800"/></svg>
<svg class="ic" style="left:169.30px;top:104.20px" width="52" height="52" viewBox="-26.0 -26.0 52 52" fill="none" stroke="#ffffff" stroke-width="2" stroke-linecap="round" stroke-linejoin="round"><path d="M-14.300 -11.700L10.700 13.300M-3.300 -0.700L9.500 -13.500M0.200 2.800L3.700 -0.700L0.200 -4.200" stroke-width="1.900"/><path d="M13 15.800L16.200 18.800L19.400 15.800" stroke-width="1.800"/></svg>
<svg class="ic" style="left:23.30px;top:154.80px" width="52" height="52" viewBox="-26.0 -26.0 52 52" fill="none" stroke="#ffffff" stroke-width="2" stroke-linecap="round" stroke-linejoin="round"><rect x="-13.500" y="-13.500" width="27.500" height="27.500" rx="1.500" fill="#6b6b6b"/></svg>
<svg class="ic" style="left:169.30px;top:154.80px" width="52" height="52" viewBox="-26.0 -26.0 52 52" fill="none" stroke="#ffffff" stroke-width="2" stroke-linecap="round" stroke-linejoin="round"><rect x="-13.500" y="-13.500" width="27.500" height="27.500" rx="6.500" fill="#6b6b6b"/><path d="M13 15.800L16.200 18.800L19.400 15.800" stroke-width="1.800"/></svg>
<svg class="ic" style="left:23.30px;top:205.70px" width="52" height="52" viewBox="-26.0 -26.0 52 52" fill="none" stroke="#ffffff" stroke-width="2" stroke-linecap="round" stroke-linejoin="round"><circle cx="0" cy="0" r="13.800" fill="#6b6b6b"/><path d="M13 15.800L16.200 18.800L19.400 15.800" stroke-width="1.800"/></svg>
<svg class="ic" style="left:96.40px;top:205.70px" width="52" height="52" viewBox="-26.0 -26.0 52 52" fill="none" stroke="#ffffff" stroke-width="2" stroke-linecap="round" stroke-linejoin="round"><ellipse cx="0" cy="0.500" rx="13.800" ry="9" fill="#6b6b6b"/><rect x="-14.5" y="-14.2" width="4.4" height="4.4" fill="#ffffff" stroke="none"/><rect x="10.100000000000001" y="10.3" width="4.4" height="4.4" fill="#ffffff" stroke="none"/></svg>
<svg class="ic" style="left:169.30px;top:205.70px" width="52" height="52" viewBox="-26.0 -26.0 52 52" fill="none" stroke="#ffffff" stroke-width="2" stroke-linecap="round" stroke-linejoin="round"><circle cx="0" cy="0" r="13.800" fill="#6b6b6b" stroke="none"/><path d="M9.800 -9.800A13.800 13.800 0 0 1 -9.800 9.800" /><path d="M-9.800 9.800A13.800 13.800 0 0 1 9.800 -9.800" stroke="#555" stroke-width="1.500"/><rect x="7.6000000000000005" y="-12.0" width="4.4" height="4.4" fill="#ffffff" stroke="none"/><rect x="-12.0" y="7.6000000000000005" width="4.4" height="4.4" fill="#ffffff" stroke="none"/><path d="M13 15.800L16.200 18.800L19.400 15.800" stroke-width="1.800"/></svg>
<svg class="ic" style="left:23.30px;top:256.60px" width="52" height="52" viewBox="-26.0 -26.0 52 52" fill="none" stroke="#ffffff" stroke-width="2" stroke-linecap="round" stroke-linejoin="round"><path d="M-5.500 -13.500H13.500L3.500 0L13.500 13.500H-5.500L-13.500 0Z" fill="#6b6b6b"/></svg>
<svg class="ic" style="left:96.40px;top:256.60px" width="52" height="52" viewBox="-26.0 -26.0 52 52" fill="none" stroke="#ffffff" stroke-width="2" stroke-linecap="round" stroke-linejoin="round"><path d="M-14 3.500L-4.500 -6.500L6 5.500L14 -2.500"/></svg>
<svg class="ic" style="left:169.30px;top:256.60px" width="52" height="52" viewBox="-26.0 -26.0 52 52" fill="none" stroke="#ffffff" stroke-width="2" stroke-linecap="round" stroke-linejoin="round"><path d="M-10 7.500L10 -12.500L13.500 -9L-6.500 11Z" fill="#6b6b6b" stroke="none"/><path d="M-13.500 7.500L8.500 -14.500M-7.500 13.500L14.500 -8.500" stroke-width="2.200"/><path d="M13 15.800L16.200 18.800L19.400 15.800" stroke-width="1.800"/></svg>
<svg class="ic" style="left:23.30px;top:307.50px" width="52" height="52" viewBox="-26.0 -26.0 52 52" fill="none" stroke="#ffffff" stroke-width="2" stroke-linecap="round" stroke-linejoin="round"><path d="M0 -13.500L12 -6.800V6.800L0 13.500L-12 6.800V-6.800Z" fill="#6b6b6b"/><rect x="-14.5" y="-2.5" width="5" height="5" fill="#ffffff" stroke="none"/><rect x="9.5" y="-2.5" width="5" height="5" fill="#ffffff" stroke="none"/><path d="M13 15.800L16.200 18.800L19.400 15.800" stroke-width="1.800"/></svg>
<svg class="ic" style="left:96.40px;top:307.50px" width="52" height="52" viewBox="-26.0 -26.0 52 52" fill="none" stroke="#ffffff" stroke-width="2" stroke-linecap="round" stroke-linejoin="round"><path d="M-14 13.500C-6 13.500 -5 -9.500 0 -9.500C5 -9.500 6 13.500 14 13.500"/><path d="M-12 -10.500H12" stroke-width="1.800"/><rect x="-14.3" y="-12.8" width="4.6" height="4.6" fill="#ffffff" stroke="none"/><rect x="-2.5" y="-13.0" width="5" height="5" fill="#ffffff" stroke="none"/><rect x="9.7" y="-12.8" width="4.6" height="4.6" fill="#ffffff" stroke="none"/></svg>
<svg class="ic" style="left:169.30px;top:307.50px" width="52" height="52" viewBox="-26.0 -26.0 52 52" fill="none" stroke="#ffffff" stroke-width="2" stroke-linecap="round" stroke-linejoin="round"><path d="M-11 11C-11 -2 -6 -12 0 -12C6 -12 11 -2 11 11" stroke-width="2.200"/><rect x="-13.7" y="8.3" width="5.4" height="5.4" fill="#ffffff" stroke="none"/><rect x="8.3" y="8.3" width="5.4" height="5.4" fill="#ffffff" stroke="none"/><rect x="-2.7" y="-14.7" width="5.4" height="5.4" fill="#ffffff" stroke="none"/></svg>
<svg class="ic" style="left:23.30px;top:358.30px" width="52" height="52" viewBox="-26.0 -26.0 52 52" fill="none" stroke="#ffffff" stroke-width="2" stroke-linecap="round" stroke-linejoin="round"><path d="M-13.500 3.500C-8 -3 0 -13 4.500 -12C9 -10 -6.500 5.500 -4.500 8.500C-2 11.500 7 -4 9.500 -0.500C11.500 2.500 3.500 8 6 10.500C8 12 11 8.500 12.500 9.500"/><path d="M13 15.800L16.200 18.800L19.400 15.800" stroke-width="1.800"/></svg>
<svg class="ic" style="left:96.40px;top:358.30px" width="52" height="52" viewBox="-26.0 -26.0 52 52" fill="none" stroke="#ffffff" stroke-width="2" stroke-linecap="round" stroke-linejoin="round"><path d="M-9 -14L0 -6.500L9 -14L13.500 -7.500V6.500L8.500 13.500H-8.500L-13.500 6.500V-7.500Z" fill="#6b6b6b"/></svg>
<svg class="ic" style="left:169.30px;top:358.30px" width="52" height="52" viewBox="-26.0 -26.0 52 52" fill="none" stroke="#ffffff" stroke-width="2" stroke-linecap="round" stroke-linejoin="round"><path d="M0 -14L4.200 -4.600L14.300 -3.600L6.700 3.200L8.900 13.200L0 8L-8.900 13.200L-6.700 3.200L-14.300 -3.600L-4.200 -4.600Z" fill="#6b6b6b"/></svg>
<svg class="ic" style="left:23.30px;top:409.20px" width="52" height="52" viewBox="-26.0 -26.0 52 52" fill="none" stroke="#ffffff" stroke-width="2" stroke-linecap="round" stroke-linejoin="round"><circle cx="-0.500" cy="-0.500" r="9.500" stroke-width="1.700"/><path d="M-0.500 -13.800V-4.500M-0.500 3.500V13.300M-13.700 -0.500H-4.500M3.500 -0.500H12.800M-0.500 -2.800V1.800M-2.800 -0.500H1.800" stroke-width="1.700"/><path d="M3.800 2.200L4.600 16L8.600 12.400L16 12.600Z" fill="#fff" stroke="#1f1f1f" stroke-width="1.200"/></svg>
<svg class="ic" style="left:96.40px;top:409.20px" width="52" height="52" viewBox="-26.0 -26.0 52 52" fill="none" stroke="#ffffff" stroke-width="2" stroke-linecap="round" stroke-linejoin="round"><path d="M-3.500 -4.500A5.800 5.800 0 1 1 3.500 -4.500C2 0 4 3 7 3.500H11.500A2 2 0 0 1 13.500 5.500V9.500H-13.500V5.500A2 2 0 0 1 -11.500 3.500H-7C-4 3 -2 0 -3.500 -4.500Z" fill="#6b6b6b" stroke-width="1.800"/><path d="M-13.500 13.500H13.500" stroke-width="1.800"/></svg>
<svg class="ic" style="left:169.30px;top:409.20px" width="52" height="52" viewBox="-26.0 -26.0 52 52" fill="none" stroke="#ffffff" stroke-width="2" stroke-linecap="round" stroke-linejoin="round"><rect x="-13.500" y="-13.500" width="27.500" height="27.500" stroke-width="2.200"/><path d="M-8.500 -8.500L1 1M1 -8.500L-8.500 1" stroke-width="1.900"/></svg>
<svg class="ic" style="left:23.30px;top:460.00px" width="52" height="52" viewBox="-26.0 -26.0 52 52" fill="none" stroke="#ffffff" stroke-width="2" stroke-linecap="round" stroke-linejoin="round"><path d="M-13 13L-11.500 8.500L1 -4L5 0L-7.500 12.500Z" stroke-width="1.700"/><path d="M-1.500 -7.500L8.500 2.500M2.500 -3L6.500 -10A4.200 4.200 0 0 1 13 -6.500L7 -0.500" stroke-width="1"/><path d="M-2.500 -8.500L1 -5L5.500 -11.500A4.800 4.800 0 0 1 13.500 -5.500L6 0L9.500 3.500L7.500 5.500L-4.500 -6.500Z" fill="#fff" stroke="none"/></svg>
<svg class="ic" style="left:96.40px;top:460.00px" width="52" height="52" viewBox="-26.0 -26.0 52 52" fill="none" stroke="#ffffff" stroke-width="2" stroke-linecap="round" stroke-linejoin="round"><circle cx="-4" cy="-4" r="9.500" fill="#6b6b6b" stroke-width="2.200"/><path d="M3.500 3.500L12.500 12.500" stroke-width="4.400"/></svg>
<span class="t" style="left:107.60px;top:164.84px;font-size:31.5px;line-height:31.5px;color:#fff;transform:scaleX(0.7682);transform-origin:0 0;-webkit-text-stroke:.35px #1f1f1f;">Aa</span>
<span class="t" style="left:188.26px;top:170.75px;font-size:20.5px;line-height:20.5px;color:#fff;">P</span>
<span class="t" style="left:42.20px;top:221.65px;font-size:20.5px;line-height:20.5px;color:#fff;">D</span>
<span class="t" style="left:188.20px;top:221.65px;font-size:20.5px;line-height:20.5px;color:#fff;">R</span>
<span class="t" style="left:180.30px;top:473.21px;font-size:25.5px;line-height:25.5px;color:#fff;font-weight:700;transform:scaleX(0.8275);transform-origin:0 0;">1:1</span>
<div class="rim"></div></div>
<div class="panel" id="dimension" style="left:321px;top:137px;width:245px;height:229.500px;background:#202020">
<div class="ph" style="background:#292929"></div><div class="dot" style="left:7.80px;top:7.30px"></div><div class="dot" style="left:31.50px;top:7.30px"></div><div class="dot" style="left:55.30px;top:7.30px"></div><span class="t" style="left:80.30px;top:5.26px;font-size:18px;line-height:18px;color:#8b8b8b;letter-spacing:0.233px;">Dimension Tools</span>
<svg class="ic" style="left:23.00px;top:53.30px" width="52" height="52" viewBox="-26.0 -26.0 52 52" fill="none" stroke="#ffffff" stroke-width="2" stroke-linecap="round" stroke-linejoin="round"><path d="M-13.700 -11.700V11M14 -11.700V11M-10 -0.300H10" stroke-width="1.700"/><path d="M-12.70 -0.30L-5.70 -4.20L-5.70 3.60Z" fill="#fff" stroke="none"/><path d="M13.00 -0.30L6.00 3.60L6.00 -4.20Z" fill="#fff" stroke="none"/></svg>
<svg class="ic" style="left:96.30px;top:53.30px" width="52" height="52" viewBox="-26.0 -26.0 52 52" fill="none" stroke="#ffffff" stroke-width="2" stroke-linecap="round" stroke-linejoin="round"><path d="M-11 -13.800H11.100M-11 13.500H11.100M0 -10V10" stroke-width="1.700"/><path d="M0.00 -12.80L3.90 -5.80L-3.90 -5.80Z" fill="#fff" stroke="none"/><path d="M0.00 12.50L-3.90 5.50L3.90 5.50Z" fill="#fff" stroke="none"/></svg>
<svg class="ic" style="left:169.50px;top:53.30px" width="52" height="52" viewBox="-26.0 -26.0 52 52" fill="none" stroke="#ffffff" stroke-width="2" stroke-linecap="round" stroke-linejoin="round"><path d="M-13.700 2.500L-2 13.500M2.300 -13.500L14 -2.500M-4.500 5L5 -5" stroke-width="1.700"/><path d="M-7.60 8.30L-5.68 0.52L0.03 5.84Z" fill="#fff" stroke="none"/><path d="M8.00 -8.20L6.08 -0.42L0.37 -5.74Z" fill="#fff" stroke="none"/></svg>
<svg class="ic" style="left:23.00px;top:104.00px" width="52" height="52" viewBox="-26.0 -26.0 52 52" fill="none" stroke="#ffffff" stroke-width="2" stroke-linecap="round" stroke-linejoin="round"><path d="M-13.700 -3.900L4.800 13.900M6 -13.800L14.600 -5.100M-4.300 5.200L4.500 -6.500M-0.600 8.700L3 4L-0.700 0.500" stroke-width="1.700"/><path d="M6.80 -9.60L5.70 -1.66L-0.53 -6.36Z" fill="#fff" stroke="none"/></svg>
<svg class="ic" style="left:96.30px;top:104.00px" width="52" height="52" viewBox="-26.0 -26.0 52 52" fill="none" stroke="#ffffff" stroke-width="2" stroke-linecap="round" stroke-linejoin="round"><circle cx="0" cy="0" r="13.600" stroke-width="1.800"/><path d="M-5 5L5 -5" stroke-width="2"/><path d="M-8.60 8.60L-6.05 -0.17L0.17 6.05Z" fill="#fff" stroke="none"/><path d="M8.60 -8.60L6.05 0.17L-0.17 -6.05Z" fill="#fff" stroke="none"/></svg>
<svg class="ic" style="left:169.50px;top:104.00px" width="52" height="52" viewBox="-26.0 -26.0 52 52" fill="none" stroke="#ffffff" stroke-width="2" stroke-linecap="round" stroke-linejoin="round"><circle cx="0" cy="0" r="13.600" stroke-width="1.800"/><path d="M-1.500 1.500L5 -5" stroke-width="2"/><path d="M8.60 -8.60L6.05 0.17L-0.17 -6.05Z" fill="#fff" stroke="none"/></svg>
<svg class="ic" style="left:23.00px;top:154.50px" width="52" height="52" viewBox="-26.0 -26.0 52 52" fill="none" stroke="#ffffff" stroke-width="2" stroke-linecap="round" stroke-linejoin="round"><circle cx="-0.500" cy="-0.500" r="9.500" stroke-width="1.700"/><path d="M-0.500 -13.800V-4.500M-0.500 3.500V13.300M-13.700 -0.500H-4.500M3.500 -0.500H12.800M-0.500 -2.800V1.800M-2.800 -0.500H1.800" stroke-width="1.700"/><path d="M3.800 2.200L4.600 16L8.600 12.400L16 12.600Z" fill="#fff" stroke="#1f1f1f" stroke-width="1.200"/></svg>
<svg class="ic" style="left:96.30px;top:154.50px" width="52" height="52" viewBox="-26.0 -26.0 52 52" fill="none" stroke="#ffffff" stroke-width="2" stroke-linecap="round" stroke-linejoin="round"><path d="M-13.700 10.800H14.600M-13.700 10.800L7.800 -10.700" stroke-width="1.900"/><path d="M3.500 -5.200A17 17 0 0 1 9 4" stroke-width="1.700"/><path d="M9.00 10.40L4.80 2.90L13.20 2.90Z" fill="#fff" stroke="none"/></svg>
<div class="rim"></div></div>
<div class="panel" id="alignment" style="left:55.5px;top:695.5px;width:245px;height:550.500px;background:#202020">
<div class="ph" style="background:#292929"></div><div class="dot" style="left:8.30px;top:8.30px"></div><div class="dot" style="left:31.50px;top:8.30px"></div><div class="dot" style="left:55.00px;top:8.30px"></div><span class="t" style="left:80.30px;top:6.06px;font-size:18px;line-height:18px;color:#8b8b8b;letter-spacing:0.340px;">Alignment Tools</span>
<span class="t" style="left:32.50px;top:48.76px;font-size:18px;line-height:18px;color:#c4c4c4;letter-spacing:0.439px;">To object:</span>
<svg class="ic" style="left:23.30px;top:73.00px" width="52" height="52" viewBox="-26.0 -26.0 52 52" fill="none" stroke="#ffffff" stroke-width="2" stroke-linecap="round" stroke-linejoin="round"><path d="M-13.500 13H13.500" stroke-width="3"/><rect x="-10.5" y="-5.5" width="7.5" height="13" rx="1.500" fill="none"/><rect x="2.5" y="-13.5" width="8" height="21" rx="1.500" fill="#6b6b6b"/></svg>
<svg class="ic" style="left:96.50px;top:73.00px" width="52" height="52" viewBox="-26.0 -26.0 52 52" fill="none" stroke="#ffffff" stroke-width="2" stroke-linecap="round" stroke-linejoin="round"><path d="M-13.500 -13H13.500" stroke-width="3"/><rect x="-10.5" y="-7.5" width="7.5" height="13" rx="1.500" fill="none"/><rect x="2.5" y="-7.5" width="8" height="21" rx="1.500" fill="#6b6b6b"/></svg>
<svg class="ic" style="left:169.50px;top:73.00px" width="52" height="52" viewBox="-26.0 -26.0 52 52" fill="none" stroke="#ffffff" stroke-width="2" stroke-linecap="round" stroke-linejoin="round"><rect x="-10.5" y="-9" width="7.5" height="19" rx="1.500" fill="none"/><rect x="2.5" y="-13.5" width="8" height="27" rx="1.500" fill="#6b6b6b"/><path d="M-14 0H14" stroke-width="3"/></svg>
<svg class="ic" style="left:23.30px;top:144.80px" width="52" height="52" viewBox="-26.0 -26.0 52 52" fill="none" stroke="#ffffff" stroke-width="2" stroke-linecap="round" stroke-linejoin="round"><path d="M-13 -13.500V13.500" stroke-width="3"/><rect x="-7.5" y="-10.5" width="21" height="8" rx="1.500" fill="#6b6b6b"/><rect x="-7.5" y="2.5" width="13" height="7.5" rx="1.500" fill="none"/></svg>
<svg class="ic" style="left:96.50px;top:144.80px" width="52" height="52" viewBox="-26.0 -26.0 52 52" fill="none" stroke="#ffffff" stroke-width="2" stroke-linecap="round" stroke-linejoin="round"><path d="M13 -13.500V13.500" stroke-width="3"/><rect x="-13.5" y="-10.5" width="21" height="8" rx="1.500" fill="#6b6b6b"/><rect x="-5.5" y="2.5" width="13" height="7.5" rx="1.500" fill="none"/></svg>
<svg class="ic" style="left:169.50px;top:144.80px" width="52" height="52" viewBox="-26.0 -26.0 52 52" fill="none" stroke="#ffffff" stroke-width="2" stroke-linecap="round" stroke-linejoin="round"><rect x="-10" y="-10.5" width="20" height="8" rx="1.500" fill="none"/><rect x="-13.5" y="2.5" width="27" height="8" rx="1.500" fill="#6b6b6b"/><path d="M0 -14V14" stroke-width="3"/></svg>
<span class="t" style="left:32.50px;top:233.06px;font-size:18px;line-height:18px;color:#c4c4c4;letter-spacing:0.403px;">To document:</span>
<svg class="ic" style="left:69.0px;top:260.5px" width="106" height="106" viewBox="0 0 106 106" fill="none" stroke="#fff" stroke-width="4.200"><rect x="0" y="0" width="106" height="106" fill="#000" stroke="none"/><path d="M6 30.299999999999997V6H30.299999999999997" transform="translate(0.0,0.0)"/><path d="M6 6H30.299999999999997" transform="translate(35.3,0.0)"/><path d="M6 6H30.299999999999997V30.299999999999997" transform="translate(70.6,0.0)"/><path d="M6 5V31.299999999999997" transform="translate(0.0,35.3)"/><path d="M30.299999999999997 5V31.299999999999997" transform="translate(70.6,35.3)"/><path d="M6 6V30.299999999999997H30.299999999999997" transform="translate(0.0,70.6)"/><path d="M6 30.299999999999997H30.299999999999997" transform="translate(35.3,70.6)"/><path d="M6 30.299999999999997H30.299999999999997V6" transform="translate(70.6,70.6)"/><path d="M52.9 40.3V65.6M40.3 52.9H65.6" stroke-width="4.600"/><path d="M0.700 0.700H105.300V105.300H0.700ZM35.3 0V106M70.6 0V106M0 35.3H106M0 70.6H106" stroke="#8a8a8a" stroke-width="1.400"/></svg>
<div style="position:absolute;left:16.5px;top:382.0px;width:212px;height:1.500px;background:#3a3a3a"></div>
<span class="t" style="left:32.50px;top:401.66px;font-size:18px;line-height:18px;color:#c4c4c4;letter-spacing:0.497px;">Distribution</span>
<svg class="ic" style="left:14.50px;top:430.00px" width="44" height="44" viewBox="-22.0 -22.0 44 44" fill="none" stroke="#ffffff" stroke-width="2" stroke-linecap="round" stroke-linejoin="round"><path d="M-11.500 -13V13M11.500 -13V13" stroke-width="2.800"/><rect x="-4" y="-8.5" width="8" height="17" rx="1.500" fill="#6b6b6b"/></svg>
<svg class="ic" style="left:71.00px;top:430.00px" width="44" height="44" viewBox="-22.0 -22.0 44 44" fill="none" stroke="#ffffff" stroke-width="2" stroke-linecap="round" stroke-linejoin="round"><path d="M-13 -11.500H13M-13 11.500H13" stroke-width="2.800"/><rect x="-8.5" y="-4" width="17" height="8" rx="1.500" fill="#6b6b6b"/></svg>
<svg class="ic" style="left:128.50px;top:430.00px" width="44" height="44" viewBox="-22.0 -22.0 44 44" fill="none" stroke="#ffffff" stroke-width="2" stroke-linecap="round" stroke-linejoin="round"><path d="M-13 -11.500H10M-13 11.500H10" stroke-width="2.800"/><rect x="-4.5" y="-4" width="17.5" height="8" rx="1.500" fill="#6b6b6b"/><circle cx="9.500" cy="0" r="1.400" fill="#fff" stroke="none"/></svg>
<svg class="ic" style="left:186.50px;top:430.00px" width="44" height="44" viewBox="-22.0 -22.0 44 44" fill="none" stroke="#ffffff" stroke-width="2" stroke-linecap="round" stroke-linejoin="round"><path d="M-11.500 -10V13M11.500 -10V13" stroke-width="2.800"/><rect x="-4" y="-13.5" width="8" height="17.5" rx="1.500" fill="#6b6b6b"/><circle cx="0" cy="-10" r="1.400" fill="#fff" stroke="none"/></svg>
<div style="position:absolute;left:16.5px;top:491.29999999999995px;width:212px;height:1.500px;background:#3a3a3a"></div>
<div style="position:absolute;left:36.0px;top:508.79999999999995px;width:173px;height:26px;border-radius:6px;background:#5f5f5f;box-shadow:0 1px 1px rgba(0,0,0,.4)"></div>
<span class="t" style="left:48.30px;top:511.24px;font-size:18.5px;line-height:18.5px;color:#fff;letter-spacing:0.149px;">Distribute on Line</span>
<div class="rim"></div></div>
<div class="panel" id="layers" style="left:1478.5px;top:125.6px;width:436.5px;height:498.8px;background:#262126">
<div class="ph" style="background:#2a292a;height:30.500px"></div><div class="dot" style="left:7.20px;top:7.50px;background:#4b4a4b"></div><div class="dot" style="left:30.90px;top:7.50px;background:#4b4a4b"></div><div class="dot" style="left:54.80px;top:7.50px;background:#4b4a4b"></div><span class="t" style="left:191.20px;top:5.16px;font-size:18px;line-height:18px;color:#8b8a8b;letter-spacing:-0.205px;">Layers</span>
<div style="position:absolute;left:0.00px;top:31.50px;width:436.50px;height:42.50px;background:#242324;border-radius:0px;border-bottom:1.500px solid #3b393b"></div>
<div style="position:absolute;left:55.20px;top:39.40px;width:1.60px;height:25.00px;background:#454345;border-radius:0px;"></div>
<div style="position:absolute;left:91.90px;top:39.40px;width:1.60px;height:25.00px;background:#454345;border-radius:0px;"></div>
<div style="position:absolute;left:176.20px;top:39.40px;width:1.60px;height:25.00px;background:#454345;border-radius:0px;"></div>
<div style="position:absolute;left:262.00px;top:39.40px;width:1.60px;height:25.00px;background:#454345;border-radius:0px;"></div>
<div style="position:absolute;left:349.50px;top:39.40px;width:1.60px;height:25.00px;background:#454345;border-radius:0px;"></div>
<span class="t" style="left:98.80px;top:44.70px;font-size:15px;line-height:15px;color:#b9b7b9;transform:scaleX(0.9597);transform-origin:0 0;">Name</span>
<span class="t" style="left:182.80px;top:44.70px;font-size:15px;line-height:15px;color:#b9b7b9;letter-spacing:-0.131px;">Scale</span>
<span class="t" style="left:268.20px;top:44.70px;font-size:15px;line-height:15px;color:#b9b7b9;letter-spacing:0.727px;"># of</span>
<svg class="ic" style="left:29.50px;top:99.20px" width="22" height="22" viewBox="0 0 22 22" fill="none" ><path d="M2.500 13L7.500 18.500L19 3" stroke="#fff" stroke-width="2.200" stroke-linecap="round" stroke-linejoin="round"/></svg>
<svg class="ic" style="left:58.90px;top:97.80px" width="32" height="24" viewBox="-16 -12 32 24"><path d="M-13.600 0C-9 -7 -4.500 -9 0 -9C4.500 -9 9 -7 13.600 0C9 7 4.500 9 0 9C-4.500 9 -9 7 -13.600 0Z" fill="#5c7b3b" stroke="#141f0e" stroke-width="1.900" stroke-linejoin="round"/><circle cx="0" cy="0" r="5.700" fill="#141f0e"/><circle cx="0" cy="0" r="4.500" fill="#8d8b98"/><circle cx="0" cy="0" r="2.600" fill="#26222c"/></svg>
<span class="t" style="left:98.80px;top:101.73px;font-size:16.5px;line-height:16.5px;color:#fff;transform:scaleX(0.9649);transform-origin:0 0;text-shadow:0 0 .6px #fff;">Frame</span>
<div style="position:absolute;left:184.10px;top:94.40px;width:71.00px;height:31.50px;background:#5d595e;border-radius:7px;box-shadow:0 1px 1.500px rgba(0,0,0,.45)"></div>
<span class="t" style="left:197.00px;top:101.41px;font-size:17px;line-height:17px;color:#fff;transform:scaleX(0.8254);transform-origin:0 0;">1...</span>
<svg class="ic" style="left:229.50px;top:96.20px" width="20" height="28" viewBox="-10 -14 20 28" fill="none" stroke="#fff" stroke-width="2.1" stroke-linecap="round" stroke-linejoin="round"><path d="M-4.3 -3.2L0 -7.5L4.3 -3.2M-4.3 3.2L0 7.5L4.3 3.2"/></svg>
<span class="t" style="left:293.82px;top:101.83px;font-size:16.5px;line-height:16.5px;color:#fff;text-shadow:0 0 .6px #fff;">55</span>
<svg class="ic" style="left:29.70px;top:150.30px" width="20" height="24" viewBox="-10 -12 20 24"><path d="M-4.500 -1V-4.500a4.500 4.500 0 0 1 9 0V-1" fill="none" stroke="#fff" stroke-width="1.900"/><rect x="-8" y="-1.500" width="16" height="11.500" rx="1.800" fill="#fff"/></svg>
<svg class="ic" style="left:58.90px;top:149.90px" width="32" height="24" viewBox="-16 -12 32 24"><path d="M-13.600 0C-9 -7 -4.500 -9 0 -9C4.500 -9 9 -7 13.600 0C9 7 4.500 9 0 9C-4.500 9 -9 7 -13.600 0Z" fill="#84c552" stroke="#0a1406" stroke-width="1.900" stroke-linejoin="round"/><circle cx="0" cy="0" r="5.700" fill="#0a1406"/><circle cx="0" cy="0" r="4.500" fill="#ffffff"/><circle cx="0" cy="0" r="2.600" fill="#0a0a0a"/></svg>
<span class="t" style="left:98.80px;top:153.83px;font-size:16.5px;line-height:16.5px;color:#fff;letter-spacing:-0.079px;text-shadow:0 0 .6px #fff;">Views</span>
<div style="position:absolute;left:184.10px;top:146.50px;width:71.00px;height:31.50px;background:#5d595e;border-radius:7px;box-shadow:0 1px 1.500px rgba(0,0,0,.45)"></div>
<span class="t" style="left:197.00px;top:153.51px;font-size:17px;line-height:17px;color:#fff;transform:scaleX(0.8254);transform-origin:0 0;">1...</span>
<svg class="ic" style="left:229.50px;top:148.30px" width="20" height="28" viewBox="-10 -14 20 28" fill="none" stroke="#fff" stroke-width="2.1" stroke-linecap="round" stroke-linejoin="round"><path d="M-4.3 -3.2L0 -7.5L4.3 -3.2M-4.3 3.2L0 7.5L4.3 3.2"/></svg>
<span class="t" style="left:289.24px;top:153.93px;font-size:16.5px;line-height:16.5px;color:#fff;text-shadow:0 0 .6px #fff;">232</span>
<svg class="ic" style="left:29.70px;top:202.40px" width="20" height="24" viewBox="-10 -12 20 24"><path d="M-4.500 -1V-4.500a4.500 4.500 0 0 1 9 0V-1" fill="none" stroke="#fff" stroke-width="1.900"/><rect x="-8" y="-1.500" width="16" height="11.500" rx="1.800" fill="#fff"/></svg>
<svg class="ic" style="left:58.90px;top:202.00px" width="32" height="24" viewBox="-16 -12 32 24"><path d="M-13.600 0C-9 -7 -4.500 -9 0 -9C4.500 -9 9 -7 13.600 0C9 7 4.500 9 0 9C-4.500 9 -9 7 -13.600 0Z" fill="#84c552" stroke="#0a1406" stroke-width="1.900" stroke-linejoin="round"/><circle cx="0" cy="0" r="5.700" fill="#0a1406"/><circle cx="0" cy="0" r="4.500" fill="#ffffff"/><circle cx="0" cy="0" r="2.600" fill="#0a0a0a"/></svg>
<span class="t" style="left:98.80px;top:205.93px;font-size:16.5px;line-height:16.5px;color:#fff;letter-spacing:0.191px;text-shadow:0 0 .6px #fff;">Detail A</span>
<div style="position:absolute;left:184.10px;top:198.60px;width:71.00px;height:31.50px;background:#5d595e;border-radius:7px;box-shadow:0 1px 1.500px rgba(0,0,0,.45)"></div>
<span class="t" style="left:198.70px;top:205.61px;font-size:17px;line-height:17px;color:#fff;transform:scaleX(0.9185);transform-origin:0 0;">2X</span>
<svg class="ic" style="left:229.50px;top:200.40px" width="20" height="28" viewBox="-10 -14 20 28" fill="none" stroke="#fff" stroke-width="2.1" stroke-linecap="round" stroke-linejoin="round"><path d="M-4.3 -3.2L0 -7.5L4.3 -3.2M-4.3 3.2L0 7.5L4.3 3.2"/></svg>
<span class="t" style="left:294.44px;top:206.03px;font-size:16.5px;line-height:16.5px;color:#fff;text-shadow:0 0 .6px #fff;">11</span>
<div style="position:absolute;left:0.00px;top:442.40px;width:436.50px;height:1.50px;background:#3a373a;border-radius:0px;"></div>
<svg class="ic" style="left:19.80px;top:460.20px" width="22" height="22" viewBox="0 0 22 22" fill="none" ><path d="M11 1V21M1 11H21" stroke="#fff" stroke-width="1.800"/></svg>
<div style="position:absolute;left:56.50px;top:470.40px;width:21.00px;height:1.60px;background:#6f6c6f;border-radius:0px;"></div>
<svg class="ic" style="left:295.10px;top:458.20px" width="22" height="28" viewBox="0 0 22 28" fill="none" ><path d="M6 4V2.500H16.500V13H15" stroke="#fff" stroke-width="1.700"/><rect x="3" y="5.500" width="11" height="11" stroke="#fff" stroke-width="1.700"/><path d="M7.500 9.500V22L10.500 19.200L12.700 24L15 23L12.800 18.300H17Z" fill="#fff" stroke="#262126" stroke-width="0.800"/></svg>
<svg class="ic" style="left:333.00px;top:459.00px" width="26" height="26" viewBox="-13 -13 26 26"><path d="M11.33 -1.98 L11.33 1.98 L8.05 1.93 L7.06 4.33 L9.41 6.61 L6.61 9.41 L4.33 7.06 L1.93 8.05 L1.98 11.33 L-1.98 11.33 L-1.93 8.05 L-4.33 7.06 L-6.61 9.41 L-9.41 6.61 L-7.06 4.33 L-8.05 1.93 L-11.33 1.98 L-11.33 -1.98 L-8.05 -1.93 L-7.06 -4.33 L-9.41 -6.61 L-6.61 -9.41 L-4.33 -7.06 L-1.93 -8.05 L-1.98 -11.33 L1.98 -11.33 L1.93 -8.05 L4.33 -7.06 L6.61 -9.41 L9.41 -6.61 L7.06 -4.33 L8.05 -1.93Z M3.20 0.00 A3.20 3.20 0 1 0 -3.20 0.00 A3.20 3.20 0 1 0 3.20 0.00Z" fill="#fff" fill-rule="evenodd" stroke="none"/></svg>
<svg class="ic" style="left:363.30px;top:461.40px" width="24" height="24" viewBox="-12 -12 24 24" fill="none" stroke="#fff" stroke-width="2.2" stroke-linecap="round" stroke-linejoin="round"><path d="M-5 -2.5L0 2.5L5 -2.5"/></svg>
<div class="rim"></div></div>
<div class="panel" id="swatches" style="left:1478.5px;top:649.8px;width:436.5px;height:685.2px;background:#262126">
<div class="ph" style="background:#2a292a;height:30.500px"></div><div class="dot" style="left:7.20px;top:7.70px;background:#4b4a4b"></div><div class="dot" style="left:30.90px;top:7.70px;background:#4b4a4b"></div><div class="dot" style="left:54.80px;top:7.70px;background:#4b4a4b"></div><span class="t" style="left:178.10px;top:5.36px;font-size:18px;line-height:18px;color:#8b8a8b;letter-spacing:0.109px;">Swatches</span>
<span class="t" style="left:27.10px;top:48.99px;font-size:17.5px;line-height:17.5px;color:#fff;letter-spacing:0.446px;text-shadow:0 0 .6px #fff;">Colors</span>
<i class="sw" style="left:24.80px;top:78.00px;background:#ffffff"></i>
<i class="sw" style="left:75.45px;top:78.00px;background:#000000"></i>
<i class="sw" style="left:126.10px;top:78.00px;background:#878787"></i>
<i class="sw" style="left:176.75px;top:78.00px;background:#dc141c"></i>
<i class="sw" style="left:227.40px;top:78.00px;background:#12801f"></i>
<i class="sw" style="left:278.05px;top:78.00px;background:#0a1bd6"></i>
<i class="sw" style="left:328.70px;top:78.00px;background:#29a8e8"></i>
<i class="sw" style="left:379.35px;top:78.00px;background:#ee1b8a"></i>
<i class="sw" style="left:24.80px;top:124.10px;background:#fee83a"></i>
<i class="sw" style="left:75.45px;top:124.10px;background:#ff2a1f"></i>
<i class="sw" style="left:126.10px;top:124.10px;background:#ff4122"></i>
<i class="sw" style="left:176.75px;top:124.10px;background:#ff5a22"></i>
<i class="sw" style="left:227.40px;top:124.10px;background:#ff7625"></i>
<i class="sw" style="left:278.05px;top:124.10px;background:#ff8f28"></i>
<i class="sw" style="left:328.70px;top:124.10px;background:#ffa32b"></i>
<i class="sw" style="left:379.35px;top:124.10px;background:#ffb930"></i>
<i class="sw" style="left:24.80px;top:170.10px;background:#ffd034"></i>
<i class="sw" style="left:75.45px;top:170.10px;background:#fff23c"></i>
<i class="sw" style="left:126.10px;top:170.10px;background:#ebfc3d"></i>
<i class="sw" style="left:176.75px;top:170.10px;background:#d2fd3a"></i>
<i class="sw" style="left:227.40px;top:170.10px;background:#b6fb36"></i>
<i class="sw" style="left:278.05px;top:170.10px;background:#99f930"></i>
<i class="sw" style="left:328.70px;top:170.10px;background:#80f62c"></i>
<i class="sw" style="left:379.35px;top:170.10px;background:#63f428"></i>
<i class="sw" style="left:24.80px;top:216.10px;background:#4df42a"></i>
<i class="sw" style="left:75.45px;top:216.10px;background:#39f42c"></i>
<i class="sw" style="left:126.10px;top:216.10px;background:#2ff530"></i>
<i class="sw" style="left:176.75px;top:216.10px;background:#2af73a"></i>
<i class="sw" style="left:227.40px;top:216.10px;background:#2df54d"></i>
<i class="sw" style="left:278.05px;top:216.10px;background:#31f563"></i>
<i class="sw" style="left:328.70px;top:216.10px;background:#33f77c"></i>
<i class="sw" style="left:379.35px;top:216.10px;background:#35f992"></i>
<i class="sw" style="left:24.80px;top:262.10px;background:#36fa96"></i>
<i class="sw" style="left:75.45px;top:262.10px;background:#36fcb2"></i>
<i class="sw" style="left:126.10px;top:262.10px;background:#33fdd0"></i>
<i class="sw" style="left:176.75px;top:262.10px;background:#30fdec"></i>
<i class="sw" style="left:227.40px;top:262.10px;background:#2eeffd"></i>
<i class="sw" style="left:278.05px;top:262.10px;background:#2fd4fd"></i>
<i class="sw" style="left:328.70px;top:262.10px;background:#2ebbfd"></i>
<i class="sw" style="left:379.35px;top:262.10px;background:#2ba3fc"></i>
<i class="sw" style="left:24.80px;top:308.10px;background:#2788fd"></i>
<i class="sw" style="left:75.45px;top:308.10px;background:#2272fc"></i>
<i class="sw" style="left:126.10px;top:308.10px;background:#1b5bfc"></i>
<i class="sw" style="left:176.75px;top:308.10px;background:#1440fc"></i>
<i class="sw" style="left:227.40px;top:308.10px;background:#0f2bfb"></i>
<i class="sw" style="left:278.05px;top:308.10px;background:#1526fb"></i>
<i class="sw" style="left:328.70px;top:308.10px;background:#2a28fb"></i>
<i class="sw" style="left:379.35px;top:308.10px;background:#4427fc"></i>
<i class="sw" style="left:24.80px;top:354.30px;background:#5a27fc"></i>
<i class="sw" style="left:75.45px;top:354.30px;background:#7b28fd"></i>
<i class="sw" style="left:126.10px;top:354.30px;background:#9a2afd"></i>
<i class="sw" style="left:176.75px;top:354.30px;background:#b32bfd"></i>
<i class="sw" style="left:227.40px;top:354.30px;background:#cc30fd"></i>
<i class="sw" style="left:278.05px;top:354.30px;background:#e737fb"></i>
<i class="sw" style="left:328.70px;top:354.30px;background:#fc3af8"></i>
<i class="sw" style="left:379.35px;top:354.30px;background:#fd36dc"></i>
<i class="sw" style="left:24.80px;top:400.40px;background:#fd2fc0"></i>
<i class="sw" style="left:75.45px;top:400.40px;background:#fd27a4"></i>
<i class="sw" style="left:126.10px;top:400.40px;background:#fc2088"></i>
<i class="sw" style="left:176.75px;top:400.40px;background:#fc196b"></i>
<i class="sw" style="left:227.40px;top:400.40px;background:#fc1850"></i>
<i class="sw" style="left:278.05px;top:400.40px;background:#fb1736"></i>
<i class="sw" style="left:328.70px;top:400.40px;background:#fb1623"></i>
<i class="sw" style="left:379.35px;top:400.40px;background:#fb1519"></i>
<i class="sw" style="left:24.80px;top:446.50px;background:#c81f12"></i>
<i class="sw" style="left:75.45px;top:446.50px;background:#c8370f"></i>
<i class="sw" style="left:126.10px;top:446.50px;background:#c95118"></i>
<i class="sw" style="left:176.75px;top:446.50px;background:#c76619"></i>
<i class="sw" style="left:227.40px;top:446.50px;background:#c8791a"></i>
<i class="sw" style="left:278.05px;top:446.50px;background:#c78a1c"></i>
<i class="sw" style="left:328.70px;top:446.50px;background:#c89f24"></i>
<i class="sw" style="left:379.35px;top:446.50px;background:#3a3a3a"></i>
<i class="sw" style="left:24.80px;top:492.70px;background:#555555"></i>
<i class="sw" style="left:75.45px;top:492.70px;background:#747474"></i>
<i class="sw" style="left:126.10px;top:492.70px;background:#8b8b8b"></i>
<i class="sw" style="left:176.75px;top:492.70px;background:#a3a3a3"></i>
<i class="sw" style="left:227.40px;top:492.70px;background:#bcbcbc"></i>
<i class="sw" style="left:278.05px;top:492.70px;background:#d3d3d3"></i>
<i class="sw" style="left:328.70px;top:492.70px;background:#ececec"></i>
<i class="sw" style="left:379.35px;top:492.70px;background:#7396b2"></i>
<span class="t" style="left:27.30px;top:562.19px;font-size:17.5px;line-height:17.5px;color:#fff;letter-spacing:0.491px;text-shadow:0 0 .6px #fff;">Gradients</span>
<i class="sw" style="left:24.80px;top:591.10px;background:linear-gradient(90deg,#8a4a1c 0%,#6a3410 14%,#96501c 26%,#5c2808 42%,#7a3a10 58%,#5a2606 72%,#8a4818 88%,#6a3410 100%)"></i>
<i class="sw" style="left:75.45px;top:591.10px;background:linear-gradient(90deg,#fbf8e4 0%,#f4f0dc 30%,#d6d2ca 55%,#f2f2f0 78%,#ffffff 100%)"></i>
<i class="sw" style="left:126.10px;top:591.10px;background:linear-gradient(90deg,#1f74d4 0%,#3a3cc0 14%,#8a28b0 28%,#e61e8c 44%,#f23030 58%,#f98c20 72%,#f2e42c 86%,#3eb044 100%)"></i>
<i class="sw" style="left:176.75px;top:591.10px;background:linear-gradient(180deg,#f6e23a 0%,#e8a04a 22%,#b0409c 50%,#c8348c 70%,#e6304a 100%)"></i>
<i class="sw" style="left:227.40px;top:591.10px;background:linear-gradient(90deg,#a8cc30 0%,#d8dc2c 30%,#fbe028 50%,#a0c830 72%,#2cae40 100%)"></i>
<i class="sw" style="left:278.05px;top:591.10px;background:radial-gradient(circle at 50% 50%,#ffffff 0%,#b8ecfc 22%,#3cc8f4 60%,#22b8ee 100%)"></i>
<i class="sw" style="left:328.70px;top:591.10px;background:radial-gradient(circle at 32% 26%,#ffd0d0 0%,#f86a6a 22%,#f03c3c 50%,#ee3030 100%)"></i>
<i class="sw" style="left:379.35px;top:591.10px;background:linear-gradient(125deg,#b47a44 0%,#e8c8a0 18%,#fbeedc 30%,#c08850 46%,#8a4a1e 60%,#d8a878 78%,#f0d4b0 90%,#a8682c 100%)"></i>
<div style="position:absolute;left:0.00px;top:628.20px;width:436.50px;height:1.50px;background:#3a373a;border-radius:0px;"></div>
<svg class="ic" style="left:20.00px;top:645.20px" width="22" height="22" viewBox="0 0 22 22" fill="none" ><path d="M11 1V21M1 11H21" stroke="#fff" stroke-width="1.800"/></svg>
<div style="position:absolute;left:56.50px;top:655.40px;width:21.00px;height:1.60px;background:#6f6c6f;border-radius:0px;"></div>
<svg class="ic" style="left:372.50px;top:645.20px" width="26" height="26" viewBox="-13 -13 26 26"><path d="M11.33 -1.98 L11.33 1.98 L8.05 1.93 L7.06 4.33 L9.41 6.61 L6.61 9.41 L4.33 7.06 L1.93 8.05 L1.98 11.33 L-1.98 11.33 L-1.93 8.05 L-4.33 7.06 L-6.61 9.41 L-9.41 6.61 L-7.06 4.33 L-8.05 1.93 L-11.33 1.98 L-11.33 -1.98 L-8.05 -1.93 L-7.06 -4.33 L-9.41 -6.61 L-6.61 -9.41 L-4.33 -7.06 L-1.93 -8.05 L-1.98 -11.33 L1.98 -11.33 L1.93 -8.05 L4.33 -7.06 L6.61 -9.41 L9.41 -6.61 L7.06 -4.33 L8.05 -1.93Z M3.20 0.00 A3.20 3.20 0 1 0 -3.20 0.00 A3.20 3.20 0 1 0 3.20 0.00Z" fill="#7b787b" fill-rule="evenodd" stroke="none"/></svg>
<svg class="ic" style="left:403.30px;top:647.70px" width="24" height="24" viewBox="-12 -12 24 24" fill="none" stroke="#5f5c5f" stroke-width="2.2" stroke-linecap="round" stroke-linejoin="round"><path d="M-5 -2.5L0 2.5L5 -2.5"/></svg>
<div class="rim"></div></div>
<div class="panel" id="properties" style="left:1944px;top:125.6px;width:437px;height:1209.4px;background:#262126">
<div class="ph" style="background:#2a292a;height:30.500px"></div><div class="dot" style="left:7.20px;top:7.50px;background:#4b4a4b"></div><div class="dot" style="left:31.30px;top:7.50px;background:#4b4a4b"></div><div class="dot" style="left:54.90px;top:7.50px;background:#4b4a4b"></div><span class="t" style="left:175.45px;top:5.16px;font-size:18px;line-height:18px;color:#8b8a8b;letter-spacing:0.296px;">Properties</span>
<span class="t" style="left:32.00px;top:56.92px;font-size:21px;line-height:21px;color:#fff;transform:scaleX(0.8869);transform-origin:0 0;text-shadow:0 0 .6px #fff;">COLORS &amp; PATTERNS</span>
<svg class="ic" style="left:382.00px;top:55.80px" width="24" height="24" viewBox="-12 -12 24 24" fill="none" stroke="#a5a1a5" stroke-width="2.2" stroke-linecap="round" stroke-linejoin="round"><path d="M-6 -2.75L0 2.75L6 -2.75"/></svg>
<svg class="ic" style="left:34.00px;top:101.40px" width="26" height="32" viewBox="0 0 26 32" fill="none" ><path d="M12.500 3C9.500 9 3.500 15 3.500 21A9 9 0 0 0 21.500 21C21.500 15 15.500 9 12.500 3Z" fill="#5d595e" stroke="#c9c6c9" stroke-width="1.700" stroke-linejoin="round"/></svg>
<svg class="ic" style="left:66.60px;top:101.90px" width="152" height="34.300" viewBox="0 0 152 34.300"><rect width="152" height="34.300" rx="6" fill="#fff"/><path d="M3 33L149 1.500" stroke="#ee2233" stroke-width="1.700"/></svg>
<svg class="ic" style="left:229.30px;top:102.80px" width="32" height="32" viewBox="-16 -16 32 32"><path d="M0 -13.500A13.500 13.500 0 0 1 0 13.500Z" fill="#5d595e"/><circle r="13.500" fill="none" stroke="#d0cdd0" stroke-width="1.600"/><path d="M0 -13.500V13.500" stroke="#d0cdd0" stroke-width="1.600"/></svg>
<div style="position:absolute;left:266.40px;top:103.60px;width:135.30px;height:31.50px;background:#2f2c30;border-radius:8px;border:1.500px solid #403d41"></div>
<div style="position:absolute;left:281.80px;top:106.40px;width:54.40px;height:24.40px;background:#4b484c;border-radius:1px;"></div>
<span class="t" style="left:282.70px;top:107.63px;font-size:23px;line-height:23px;color:#fff;transform:scaleX(0.8976);transform-origin:0 0;">100%</span>
<div style="position:absolute;left:373.00px;top:106.40px;width:26.00px;height:25.50px;background:#62ba46;border-radius:6px;"></div><svg class="ic" style="left:373.00px;top:106.40px" width="26" height="25.5" viewBox="0 0 26 25.5" fill="none" ><path d="M4.500 9.500H21.500" stroke="#fff" stroke-width="1.700" stroke-linecap="round"/><circle cx="13" cy="9.500" r="3.300" fill="#fff"/><path d="M5.500 17V20M10.500 17.500V20M15.500 17.500V20M20.500 17V20" stroke="#e8ffe0" stroke-width="1.500"/></svg>
<svg class="ic" style="left:30.00px;top:158.40px" width="32" height="34" viewBox="0 0 32 34" fill="none" ><path d="M3 30.500L5.500 22.500L22 6L27.500 11.500L11 28Z" fill="#5d595e" stroke="#c9c6c9" stroke-width="1.700" stroke-linejoin="round"/><path d="M19 9L24.500 14.500M5.500 22.500L11 28M3 30.500L6 29.500" stroke="#c9c6c9" stroke-width="1.500"/></svg>
<div style="position:absolute;left:67.50px;top:159.90px;width:150.50px;height:33.00px;background:#000;border-radius:6px;border:1.500px solid #3a373a"></div>
<svg class="ic" style="left:229.30px;top:160.10px" width="32" height="32" viewBox="-16 -16 32 32"><path d="M0 -13.500A13.500 13.500 0 0 1 0 13.500Z" fill="#5d595e"/><circle r="13.500" fill="none" stroke="#d0cdd0" stroke-width="1.600"/><path d="M0 -13.500V13.500" stroke="#d0cdd0" stroke-width="1.600"/></svg>
<div style="position:absolute;left:266.40px;top:160.90px;width:135.30px;height:31.50px;background:#2f2c30;border-radius:8px;border:1.500px solid #403d41"></div>
<span class="t" style="left:282.70px;top:164.93px;font-size:23px;line-height:23px;color:#fff;transform:scaleX(0.8976);transform-origin:0 0;">100%</span>
<div style="position:absolute;left:373.00px;top:163.70px;width:26.00px;height:25.50px;background:#62ba46;border-radius:6px;"></div><svg class="ic" style="left:373.00px;top:163.70px" width="26" height="25.5" viewBox="0 0 26 25.5" fill="none" ><path d="M4.500 9.500H21.500" stroke="#fff" stroke-width="1.700" stroke-linecap="round"/><circle cx="13" cy="9.500" r="3.300" fill="#fff"/><path d="M5.500 17V20M10.500 17.500V20M15.500 17.500V20M20.500 17V20" stroke="#e8ffe0" stroke-width="1.500"/></svg>
<div style="position:absolute;left:0.00px;top:224.00px;width:437.00px;height:1.60px;background:#3d3a3e;border-radius:0px;"></div>
<span class="t" style="left:32.00px;top:251.82px;font-size:21px;line-height:21px;color:#fff;transform:scaleX(0.8937);transform-origin:0 0;text-shadow:0 0 .6px #fff;">TEXT OPTIONS</span>
<svg class="ic" style="left:382.00px;top:251.30px" width="24" height="24" viewBox="-12 -12 24 24" fill="none" stroke="#a5a1a5" stroke-width="2.2" stroke-linecap="round" stroke-linejoin="round"><path d="M-6 -2.75L0 2.75L6 -2.75"/></svg>
<div style="position:absolute;left:31.80px;top:300.60px;width:219.40px;height:31.50px;background:#5d595e;border-radius:8px;box-shadow:0 1px 1.500px rgba(0,0,0,.45)"></div>
<span class="t" style="left:45.00px;top:304.55px;font-size:20.5px;line-height:20.5px;color:#fff;letter-spacing:0.377px;">Lucida Grande</span>
<svg class="ic" style="left:225.10px;top:302.40px" width="20" height="28" viewBox="-10 -14 20 28" fill="none" stroke="#fff" stroke-width="2.2" stroke-linecap="round" stroke-linejoin="round"><path d="M-4.515 -3.4L0 -7.914999999999999L4.515 -3.4M-4.515 3.4L0 7.914999999999999L4.515 3.4"/></svg>
<div style="position:absolute;left:267.70px;top:300.60px;width:136.60px;height:31.50px;background:#5d595e;border-radius:8px;box-shadow:0 1px 1.500px rgba(0,0,0,.45)"></div>
<span class="t" style="left:281.20px;top:304.55px;font-size:20.5px;line-height:20.5px;color:#fff;letter-spacing:-0.032px;">Regular</span>
<svg class="ic" style="left:378.30px;top:302.40px" width="20" height="28" viewBox="-10 -14 20 28" fill="none" stroke="#fff" stroke-width="2.2" stroke-linecap="round" stroke-linejoin="round"><path d="M-4.515 -3.4L0 -7.914999999999999L4.515 -3.4M-4.515 3.4L0 7.914999999999999L4.515 3.4"/></svg>
<span class="t" style="left:32.00px;top:370.76px;font-size:16px;line-height:16px;color:#bdb9bd;">A</span>
<span class="t" style="left:45.00px;top:361.87px;font-size:26.5px;line-height:26.5px;color:#bdb9bd;transform:scaleX(.88);transform-origin:0 0;">A</span>
<div style="position:absolute;left:66.80px;top:357.80px;width:118.20px;height:34.50px;background:#474348;border-radius:7px;border:1.500px solid #5c585d;box-shadow:inset 0 1px 0 rgba(255,255,255,.04)"></div>
<span class="t" style="left:102.00px;top:365.00px;font-size:21.5px;line-height:21.5px;color:#fff;letter-spacing:-0.205px;">18 pt</span>
<div style="position:absolute;left:191.00px;top:359.30px;width:21.00px;height:31.50px;background:#5d595e;border-radius:8px;box-shadow:0 1px 1.500px rgba(0,0,0,.4)"></div><svg class="ic" style="left:191.00px;top:359.30px" width="21" height="31.5" viewBox="0 0 21 31.5" fill="none" stroke="#fff" stroke-width="2.100" stroke-linecap="round" stroke-linejoin="round"><path d="M5.9 11.25L10.5 6.550000000000001L15.1 11.25M5.9 20.25L10.5 24.95L15.1 20.25"/></svg>
<svg class="ic" style="left:231.00px;top:359.40px" width="32" height="28" viewBox="0 0 32 28" fill="none" ><path d="M6.500 4V23M2.500 8L6.500 3.500L10.500 8M2.500 19L6.500 23.500L10.500 19" stroke="#d0cdd0" stroke-width="1.900" stroke-linecap="round" stroke-linejoin="round"/><path d="M15 4.500H29M15 13.500H29M15 23H29" stroke="#d0cdd0" stroke-width="1.700"/></svg>
<div style="position:absolute;left:267.70px;top:357.80px;width:136.60px;height:31.20px;background:#5d595e;border-radius:8px;box-shadow:0 1px 1.500px rgba(0,0,0,.45)"></div>
<span class="t" style="left:280.50px;top:362.05px;font-size:20.5px;line-height:20.5px;color:#fff;letter-spacing:0.343px;">Single</span>
<svg class="ic" style="left:378.30px;top:359.40px" width="20" height="28" viewBox="-10 -14 20 28" fill="none" stroke="#fff" stroke-width="2.2" stroke-linecap="round" stroke-linejoin="round"><path d="M-4.515 -3.4L0 -7.914999999999999L4.515 -3.4M-4.515 3.4L0 7.914999999999999L4.515 3.4"/></svg>
<div style="position:absolute;left:32.00px;top:419.70px;width:21.80px;height:21.70px;background:#5d595e;border-radius:5.5px;box-shadow:0 1px 1.500px rgba(0,0,0,.45)"></div>
<svg class="ic" style="left:32.00px;top:419.70px" width="22" height="22" viewBox="0 0 22 22" fill="none" ><path d="M5 11.500L9.200 16L17 5.500" stroke="#fff" stroke-width="2.800" stroke-linecap="round" stroke-linejoin="round"/></svg>
<span class="t" style="left:64.00px;top:420.82px;font-size:21px;line-height:21px;color:#fff;letter-spacing:0.408px;">Highlight Clipped Text</span>
<div style="position:absolute;left:32.00px;top:468.60px;width:373.60px;height:1.60px;background:#454246;border-radius:0px;"></div>
<span class="t" style="left:32.00px;top:498.32px;font-size:21px;line-height:21px;color:#b3afb3;letter-spacing:0.417px;">Text Alignment</span>
<div style="position:absolute;left:28.10px;top:544.40px;width:380.80px;height:36.40px;background:#312e32;border-radius:9px;border:1.500px solid #423f43"></div>
<div style="position:absolute;left:28.10px;top:544.40px;width:127.10px;height:36.40px;background:#62ba46;border-radius:9px;"></div>
<svg class="ic" style="left:77.80px;top:547.70px" width="28" height="28" viewBox="-14 -14 28 28" stroke="#0c3a0c" stroke-width="1.6"><path d="M-11.25 -9.60H2.75M-11.25 -4.80H11.25M-11.25 0.00H5.25M-11.25 4.80H11.25M-11.25 9.60H2.75"/></svg>
<svg class="ic" style="left:203.50px;top:547.70px" width="28" height="28" viewBox="-14 -14 28 28" stroke="#fff" stroke-width="1.6"><path d="M-6.25 -9.60H6.25M-11.25 -4.80H11.25M-8.25 0.00H8.25M-11.25 4.80H11.25M-6.25 9.60H6.25"/></svg>
<svg class="ic" style="left:329.10px;top:547.70px" width="28" height="28" viewBox="-14 -14 28 28" stroke="#fff" stroke-width="1.6"><path d="M-2.75 -9.60H11.25M-11.25 -4.80H11.25M-5.25 0.00H11.25M-11.25 4.80H11.25M-2.75 9.60H11.25"/></svg>
<div style="position:absolute;left:28.10px;top:601.90px;width:380.80px;height:35.90px;background:#312e32;border-radius:9px;border:1.500px solid #423f43"></div>
<div style="position:absolute;left:28.10px;top:601.90px;width:127.10px;height:35.90px;background:#62ba46;border-radius:9px;"></div>
<svg class="ic" style="left:77.80px;top:597.40px" width="28" height="28" viewBox="-14 -14 28 28" stroke="#0c3a0c" stroke-width="1.6"><path d="M-11.25 -2.50H11.25M-11.25 2.50H11.25"/></svg>
<svg class="ic" style="left:203.50px;top:606.10px" width="28" height="28" viewBox="-14 -14 28 28" stroke="#fff" stroke-width="1.6"><path d="M-11.25 -2.50H11.25M-11.25 2.50H11.25"/></svg>
<svg class="ic" style="left:329.10px;top:614.00px" width="28" height="28" viewBox="-14 -14 28 28" stroke="#fff" stroke-width="1.6"><path d="M-11.25 -2.50H11.25M-11.25 2.50H11.25"/></svg>
<div style="position:absolute;left:0.00px;top:672.10px;width:437.00px;height:1.60px;background:#3d3a3e;border-radius:0px;"></div>
<span class="t" style="left:32.00px;top:700.32px;font-size:21px;line-height:21px;color:#fff;transform:scaleX(0.8847);transform-origin:0 0;text-shadow:0 0 .6px #fff;">RESIZE &amp; POSITION</span>
<svg class="ic" style="left:382.00px;top:699.60px" width="24" height="24" viewBox="-12 -12 24 24" fill="none" stroke="#a5a1a5" stroke-width="2.2" stroke-linecap="round" stroke-linejoin="round"><path d="M-6 -2.75L0 2.75L6 -2.75"/></svg>
<div style="position:absolute;left:28.10px;top:746.40px;width:380.80px;height:35.80px;background:#312e32;border-radius:9px;border:1.500px solid #423f43"></div>
<div style="position:absolute;left:218.20px;top:746.40px;width:190.70px;height:35.80px;background:#62ba46;border-radius:9px;"></div>
<span class="t" style="left:86.10px;top:752.42px;font-size:21px;line-height:21px;color:#fff;letter-spacing:-0.124px;">Relative</span>
<span class="t" style="left:269.20px;top:752.42px;font-size:21px;line-height:21px;color:#0a360a;letter-spacing:0.268px;">Absolute</span>
<span class="t" style="left:32.00px;top:808.32px;font-size:21px;line-height:21px;color:#b3afb3;letter-spacing:0.156px;">Position</span>
<span class="t" style="left:32.50px;top:854.32px;font-size:21px;line-height:21px;color:#b3afb3;">X</span><div style="position:absolute;left:63.50px;top:847.60px;width:125.80px;height:34.00px;background:#474348;border-radius:7px;border:1.500px solid #5c585d;box-shadow:inset 0 1px 0 rgba(255,255,255,.04)"></div><span class="t" style="left:75.30px;top:855.10px;font-size:21.5px;line-height:21.5px;color:#fff;letter-spacing:0.310px;">1'6-15/32&quot;</span><div style="position:absolute;left:195.40px;top:848.80px;width:20.60px;height:31.50px;background:#5d595e;border-radius:8px;box-shadow:0 1px 1.500px rgba(0,0,0,.4)"></div><svg class="ic" style="left:195.40px;top:848.80px" width="20.6" height="31.5" viewBox="0 0 20.6 31.5" fill="none" stroke="#fff" stroke-width="2.100" stroke-linecap="round" stroke-linejoin="round"><path d="M5.700000000000001 11.25L10.3 6.550000000000001L14.9 11.25M5.700000000000001 20.25L10.3 24.95L14.9 20.25"/></svg><span class="t" style="left:233.00px;top:854.32px;font-size:21px;line-height:21px;color:#b3afb3;">Y</span><div style="position:absolute;left:253.40px;top:847.60px;width:124.40px;height:34.00px;background:#474348;border-radius:7px;border:1.500px solid #5c585d;box-shadow:inset 0 1px 0 rgba(255,255,255,.04)"></div><span class="t" style="left:266.40px;top:855.10px;font-size:21.5px;line-height:21.5px;color:#fff;letter-spacing:1.149px;">-3-47/64&quot;</span><div style="position:absolute;left:384.30px;top:848.80px;width:20.70px;height:31.50px;background:#5d595e;border-radius:8px;box-shadow:0 1px 1.500px rgba(0,0,0,.4)"></div><svg class="ic" style="left:384.30px;top:848.80px" width="20.7" height="31.5" viewBox="0 0 20.7 31.5" fill="none" stroke="#fff" stroke-width="2.100" stroke-linecap="round" stroke-linejoin="round"><path d="M5.75 11.25L10.35 6.550000000000001L14.95 11.25M5.75 20.25L10.35 24.95L14.95 20.25"/></svg>
<span class="t" style="left:32.00px;top:910.22px;font-size:21px;line-height:21px;color:#b3afb3;letter-spacing:0.007px;">Parameters</span>
<span class="t" style="left:32.50px;top:959.02px;font-size:21px;line-height:21px;color:#b3afb3;">W</span><div style="position:absolute;left:63.50px;top:952.50px;width:125.80px;height:34.00px;background:#474348;border-radius:7px;border:1.500px solid #5c585d;box-shadow:inset 0 1px 0 rgba(255,255,255,.04)"></div><span class="t" style="left:96.10px;top:959.80px;font-size:21.5px;line-height:21.5px;color:#fff;letter-spacing:0.273px;">1-7/8&quot;</span><div style="position:absolute;left:195.40px;top:953.70px;width:20.60px;height:31.50px;background:#5d595e;border-radius:8px;box-shadow:0 1px 1.500px rgba(0,0,0,.4)"></div><svg class="ic" style="left:195.40px;top:953.70px" width="20.6" height="31.5" viewBox="0 0 20.6 31.5" fill="none" stroke="#fff" stroke-width="2.100" stroke-linecap="round" stroke-linejoin="round"><path d="M5.700000000000001 11.25L10.3 6.550000000000001L14.9 11.25M5.700000000000001 20.25L10.3 24.95L14.9 20.25"/></svg><span class="t" style="left:233.40px;top:959.02px;font-size:21px;line-height:21px;color:#b3afb3;">H</span><div style="position:absolute;left:253.40px;top:952.50px;width:124.40px;height:34.00px;background:#474348;border-radius:7px;border:1.500px solid #5c585d;box-shadow:inset 0 1px 0 rgba(255,255,255,.04)"></div><span class="t" style="left:290.50px;top:959.80px;font-size:21.5px;line-height:21.5px;color:#fff;letter-spacing:-0.319px;">7/16&quot;</span><div style="position:absolute;left:384.30px;top:953.70px;width:20.70px;height:31.50px;background:#5d595e;border-radius:8px;box-shadow:0 1px 1.500px rgba(0,0,0,.4)"></div><svg class="ic" style="left:384.30px;top:953.70px" width="20.7" height="31.5" viewBox="0 0 20.7 31.5" fill="none" stroke="#fff" stroke-width="2.100" stroke-linecap="round" stroke-linejoin="round"><path d="M5.75 11.25L10.35 6.550000000000001L14.95 11.25M5.75 20.25L10.35 24.95L14.95 20.25"/></svg>
<div style="position:absolute;left:63.50px;top:1007.90px;width:22.20px;height:21.70px;background:#5d595e;border-radius:5.5px;box-shadow:0 1px 1.500px rgba(0,0,0,.45);background:linear-gradient(#5d595e,#4f4b50)"></div>
<span class="t" style="left:95.50px;top:1008.62px;font-size:21px;line-height:21px;color:#fff;letter-spacing:0.325px;">Constrain Proportions</span>
<span class="t" style="left:32.00px;top:1052.51px;font-size:18.3px;line-height:18.3px;color:#b3afb3;letter-spacing:0.224px;">Select an editing handle using the Select</span>
<span class="t" style="left:32.00px;top:1074.51px;font-size:18.3px;line-height:18.3px;color:#b3afb3;letter-spacing:0.302px;">Point button below to edit its parameters.</span>
<div style="position:absolute;left:31.60px;top:1120.40px;width:373.40px;height:31.60px;background:#5d595e;border-radius:8px;box-shadow:0 1px 1.500px rgba(0,0,0,.45)"></div>
<span class="t" style="left:161.00px;top:1124.62px;font-size:21px;line-height:21px;color:#fff;letter-spacing:0.212px;">Select Point</span>
<div style="position:absolute;left:31.60px;top:1171.40px;width:373.40px;height:31.40px;background:#5d595e;border-radius:8px;box-shadow:0 1px 1.500px rgba(0,0,0,.45)"></div>
<span class="t" style="left:190.40px;top:1175.22px;font-size:21px;line-height:21px;color:#fff;letter-spacing:0.267px;">Apply</span>
<div class="rim"></div></div>
</div>
</body></html>
